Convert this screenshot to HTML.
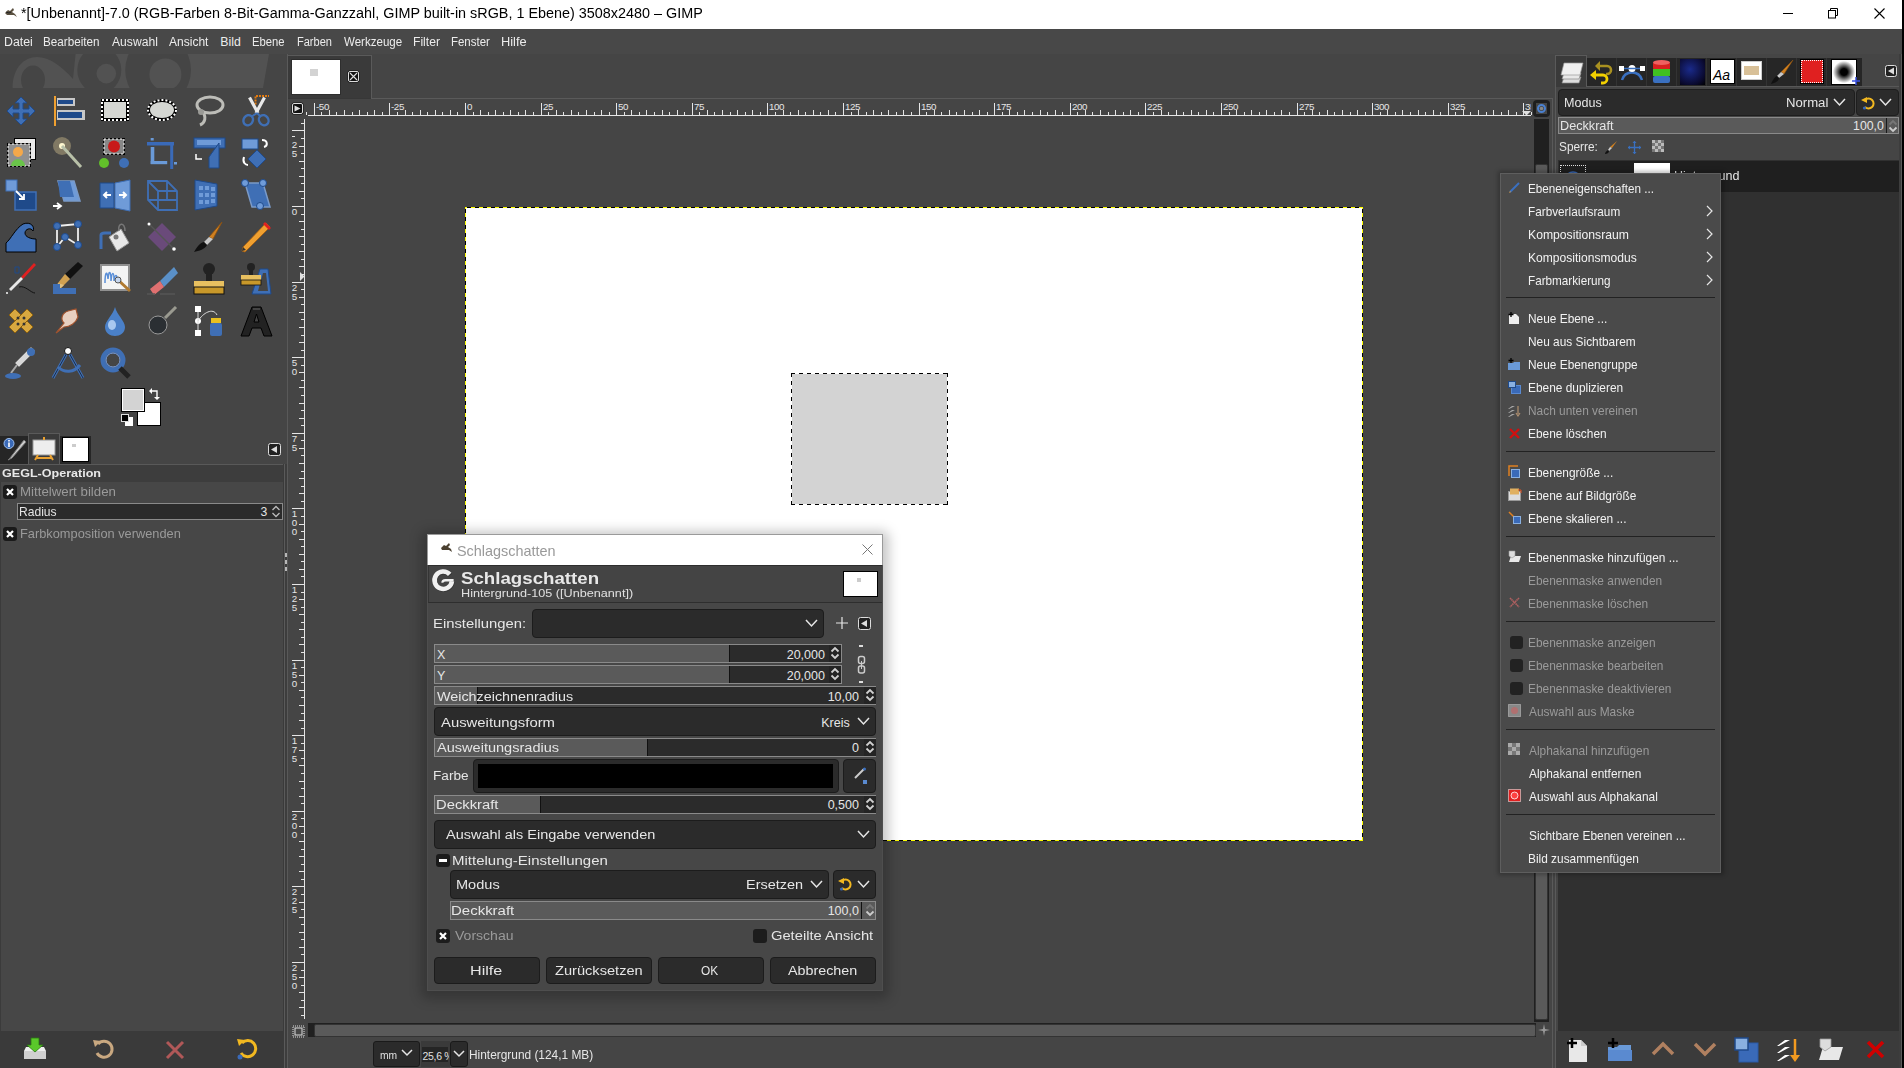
<!DOCTYPE html>
<html><head><meta charset="utf-8"><title>GIMP</title>
<style>
html,body{margin:0;padding:0}
body{width:1904px;height:1068px;overflow:hidden;position:relative;background:#454545;font-family:"Liberation Sans",sans-serif}
.a{position:absolute;box-sizing:border-box}
.t{position:absolute;white-space:nowrap;line-height:1;transform-origin:0 0}
svg.a{overflow:visible}
</style></head><body>
<div class="a" style="left:0px;top:0px;width:1904px;height:29px;background:#fff"></div>
<svg class="a" style="left:4px;top:6px;" width="14" height="12" viewBox="0 0 14 12"><path d="M1 7 L4 4 L6 5 L9 2 L10 4 L8 6 L11 8 L13 11 L10 9 L6 9 L3 9 Z" fill="#5a5040"/><path d="M2 6 L5 7 L7 6" stroke="#222" stroke-width="1" fill="none"/></svg>
<span class="t" style="left:21.40px;top:4.75px;font-size:15.3px;color:#000;transform:scaleX(0.9405);">*[Unbenannt]-7.0 (RGB-Farben 8-Bit-Gamma-Ganzzahl, GIMP built-in sRGB, 1 Ebene) 3508x2480 – GIMP</span>
<div class="a" style="left:1783px;top:13px;width:10px;height:1px;background:#000"></div>
<svg class="a" style="left:1828px;top:8px;" width="11" height="11" viewBox="0 0 11 11"><rect x="0.5" y="2.5" width="7" height="7.5" fill="none" stroke="#000"/><path d="M2.5 2.5 V0.5 H9.5 V7.5 H7.5" fill="none" stroke="#000"/></svg>
<svg class="a" style="left:1874px;top:8px;" width="11" height="11" viewBox="0 0 11 11"><path d="M0.5 0.5 L10.5 10.5 M10.5 0.5 L0.5 10.5" stroke="#000" stroke-width="1.1"/></svg>
<div class="a" style="left:0px;top:29px;width:1904px;height:25px;background:#484848"></div>
<span class="t" style="left:4.20px;top:36.19px;font-size:12.3px;color:#ececec;transform:scaleX(1.0046);">Datei</span>
<span class="t" style="left:43.35px;top:36.19px;font-size:12.3px;color:#ececec;transform:scaleX(0.9499);">Bearbeiten</span>
<span class="t" style="left:112.30px;top:36.19px;font-size:12.3px;color:#ececec;transform:scaleX(0.9858);">Auswahl</span>
<span class="t" style="left:169.00px;top:36.19px;font-size:12.3px;color:#ececec;transform:scaleX(0.9778);">Ansicht</span>
<span class="t" style="left:220.30px;top:36.19px;font-size:12.3px;color:#ececec;">Bild</span>
<span class="t" style="left:252.48px;top:36.19px;font-size:12.3px;color:#ececec;transform:scaleX(0.9159);">Ebene</span>
<span class="t" style="left:296.60px;top:36.19px;font-size:12.3px;color:#ececec;transform:scaleX(0.8971);">Farben</span>
<span class="t" style="left:344.00px;top:36.19px;font-size:12.3px;color:#ececec;transform:scaleX(0.9383);">Werkzeuge</span>
<span class="t" style="left:413.11px;top:36.19px;font-size:12.3px;color:#ececec;transform:scaleX(0.9874);">Filter</span>
<span class="t" style="left:451.47px;top:36.19px;font-size:12.3px;color:#ececec;transform:scaleX(0.9312);">Fenster</span>
<span class="t" style="left:501.26px;top:36.19px;font-size:12.3px;color:#ececec;transform:scaleX(1.0395);">Hilfe</span>
<svg class="a" style="left:0px;top:54px;" width="287" height="34" viewBox="0 0 287 34"><defs><clipPath id="wb"><rect x="0" y="0" width="287" height="34"/></clipPath></defs>
    <g clip-path="url(#wb)">
    <path d="M12.6 34 C12.6 14 24 3 37 3 C50 3 62 13 73 25 L75.6 0 L269 0 L263 34 Z" fill="#525252"/>
    <ellipse cx="33" cy="26" rx="12" ry="14.5" fill="#454545"/>
    <ellipse cx="99.3" cy="16" rx="22" ry="23.6" fill="#454545"/>
    <circle cx="106.3" cy="19.6" r="9.8" fill="#525252"/>
    <ellipse cx="158.1" cy="16" rx="32.9" ry="35.6" fill="#454545"/>
    <circle cx="165.4" cy="20.4" r="16" fill="#525252"/>
    <rect x="0" y="34" width="287" height="4" fill="#454545"/>
    </g></svg>
<svg class="a" style="left:5px;top:95px;" width="32" height="32" viewBox="0 0 32 32"><path d="M16 2 L22 8 H18 V14 H24 V10 L30 16 L24 22 V18 H18 V24 H22 L16 30 L10 24 H14 V18 H8 V22 L2 16 L8 10 V14 H14 V8 H10 Z" fill="#3f6fb5" stroke="#1f4a8a" stroke-width="1"/></svg>
<svg class="a" style="left:52px;top:95px;" width="32" height="32" viewBox="0 0 32 32"><rect x="2" y="1" width="2" height="30" fill="#f0a030"/><rect x="5" y="3" width="18" height="8" fill="#c8c8c8"/><rect x="6" y="5" width="15" height="4" fill="#1f4a8a"/><rect x="5" y="15" width="28" height="10" fill="#c8c8c8"/><rect x="6" y="17" width="24" height="6" fill="#1f4a8a"/></svg>
<svg class="a" style="left:99px;top:95px;" width="32" height="32" viewBox="0 0 32 32"><rect x="2" y="4" width="28" height="22" fill="#000"/><rect x="3" y="5" width="26" height="20" fill="none" stroke="#fff" stroke-width="2" stroke-dasharray="2 2"/><rect x="5" y="7" width="22" height="16" fill="#d4d6d2"/></svg>
<svg class="a" style="left:146px;top:95px;" width="32" height="32" viewBox="0 0 32 32"><ellipse cx="16" cy="15" rx="15" ry="11" fill="#000"/><ellipse cx="16" cy="15" rx="14" ry="10" fill="none" stroke="#fff" stroke-width="2" stroke-dasharray="2 2"/><ellipse cx="16" cy="15" rx="12" ry="8" fill="#d4d6d2"/></svg>
<svg class="a" style="left:193px;top:95px;" width="32" height="32" viewBox="0 0 32 32"><ellipse cx="17" cy="10" rx="13" ry="8" fill="none" stroke="#bdbdb8" stroke-width="3"/><path d="M9 16 C14 22 12 28 7 30" fill="none" stroke="#bdbdb8" stroke-width="3"/><circle cx="8" cy="17" r="3" fill="#9a9a96"/></svg>
<svg class="a" style="left:240px;top:95px;" width="32" height="32" viewBox="0 0 32 32"><path d="M15.5 9.5 V1 H29" stroke="#e07a10" stroke-width="2" fill="none" stroke-dasharray="2 1"/><path d="M9.5 2.5 L18 18 M24.5 2.5 L16 18" stroke="#e8e8e8" stroke-width="3.2"/><ellipse cx="8.2" cy="25.2" rx="4.6" ry="5.3" transform="rotate(35 8.2 25.2)" fill="none" stroke="#3f6fb5" stroke-width="2.4"/><ellipse cx="23.7" cy="25.2" rx="4.6" ry="5.3" transform="rotate(-35 23.7 25.2)" fill="none" stroke="#3f6fb5" stroke-width="2.4"/><path d="M17 18 L11 22 M17 18 L21 22" stroke="#3f6fb5" stroke-width="2"/></svg>
<svg class="a" style="left:5px;top:137px;" width="32" height="32" viewBox="0 0 32 32"><rect x="9" y="1" width="22" height="22" fill="#000"/><rect x="10" y="2" width="20" height="20" fill="#eaeaea"/><rect x="2" y="6" width="24" height="24" fill="#000"/><rect x="3" y="7" width="22" height="22" fill="#909090" stroke="#fff" stroke-dasharray="2 2"/><circle cx="13" cy="15" r="5" fill="#f4a84a"/><path d="M6 29 C6 20 20 20 20 29 Z" fill="#6ac44a"/></svg>
<svg class="a" style="left:52px;top:137px;" width="32" height="32" viewBox="0 0 32 32"><circle cx="10" cy="9" r="9" fill="#c9b98a" opacity="0.45"/><circle cx="10" cy="9" r="3" fill="#fff8d0"/><path d="M10 9 L29 30" stroke="#b8c0a8" stroke-width="3"/></svg>
<svg class="a" style="left:99px;top:137px;" width="32" height="32" viewBox="0 0 32 32"><rect x="4" y="1" width="22" height="17" fill="#000"/><rect x="5" y="2" width="20" height="15" fill="#888" stroke="#fff" stroke-dasharray="2 2"/><circle cx="15" cy="9.5" r="6" fill="#c81a1a"/><circle cx="5" cy="26" r="5" fill="#62c02a"/><circle cx="25" cy="26" r="5" fill="#3f6fb5"/></svg>
<svg class="a" style="left:146px;top:137px;" width="32" height="32" viewBox="0 0 32 32"><rect x="1" y="5" width="27" height="3.5" fill="#3a6ab8"/><rect x="24.2" y="5" width="3" height="27" fill="#3a6ab8"/><rect x="4.7" y="10" width="3.6" height="17" fill="#6a9ad8"/><rect x="4.7" y="24" width="16.5" height="3.2" fill="#6a9ad8"/><rect x="4.7" y="1" width="3" height="2.5" fill="#6a9ad8"/><rect x="28" y="25" width="3" height="2.5" fill="#6a9ad8"/></svg>
<svg class="a" style="left:193px;top:137px;" width="32" height="32" viewBox="0 0 32 32"><rect x="1" y="1" width="31" height="10" fill="#3f6fb5" stroke="#1f4a8a"/><rect x="4" y="3" width="24" height="5" fill="#6f9bd8"/><path d="M26 6 L26 31 L16 31 L16 20 Z" fill="#3f6fb5" stroke="#1f4a8a"/><path d="M3 17 V22 H9" stroke="#fff" stroke-width="1.5" fill="none"/></svg>
<svg class="a" style="left:240px;top:137px;" width="32" height="32" viewBox="0 0 32 32"><rect x="2" y="2" width="16" height="10" fill="#6f9bd8" stroke="#1f4a8a"/><path d="M17 13 L26 22 L17 31 L8 22 Z" fill="#3f6fb5" stroke="#1f4a8a"/><path d="M22 3 C28 3 28 9 24 10" stroke="#fff" stroke-width="2" fill="none"/><path d="M4 20 C2 26 6 28 8 28" stroke="#fff" stroke-width="2" fill="none"/></svg>
<svg class="a" style="left:5px;top:179px;" width="32" height="32" viewBox="0 0 32 32"><rect x="1" y="1" width="11" height="11" fill="#6f9bd8" stroke="#3f6fb5"/><rect x="10" y="13" width="21" height="18" fill="#1f4a8a" stroke="#3f6fb5" stroke-width="1.5"/><path d="M11 12 L19 20 M19 15 V20 H14" stroke="#fff" stroke-width="1.8" fill="none"/></svg>
<svg class="a" style="left:52px;top:179px;" width="32" height="32" viewBox="0 0 32 32"><path d="M6 2 L22 2 L28 22 L12 22 Z" fill="#6f9bd8" stroke="#7a9ac8" stroke-width="1.5"/><path d="M6 2 L18 2 L22 18 L8 18 Z" fill="#3f6fb5"/><path d="M1 27 H8 M5 24 L9 27 L5 30" stroke="#fff" stroke-width="1.8" fill="none"/></svg>
<svg class="a" style="left:99px;top:179px;" width="32" height="32" viewBox="0 0 32 32"><path d="M1 4 H15 V29 H1 Z" fill="#3f6fb5" stroke="#1f4a8a"/><path d="M16 4 L31 1 V32 L16 29 Z" fill="#6f9bd8" stroke="#3f6fb5"/><path d="M5 16 H12 M8 13 L5 16 L8 19 M20 16 H27 M24 13 L27 16 L24 19" stroke="#fff" stroke-width="2" fill="none"/></svg>
<svg class="a" style="left:146px;top:179px;" width="32" height="32" viewBox="0 0 32 32"><path d="M2 2 H21 L31 12 V31 H12 L2 21 Z M2 2 L12 12 H31 M12 12 V31 M21 2 V21 H31 M2 21 H21" fill="none" stroke="#3f6fb5" stroke-width="1.8"/></svg>
<svg class="a" style="left:193px;top:179px;" width="32" height="32" viewBox="0 0 32 32"><path d="M2 1 L24 5 V27 L2 31 Z" fill="#3f6fb5" stroke="#1f4a8a"/><g fill="#6f9bd8"><rect x="6" y="7" width="4" height="4"/><rect x="12" y="7" width="4" height="4"/><rect x="18" y="8" width="4" height="4"/><rect x="6" y="14" width="4" height="4"/><rect x="12" y="14" width="4" height="4"/><rect x="18" y="14" width="4" height="4"/><rect x="6" y="21" width="4" height="4"/><rect x="12" y="21" width="4" height="4"/><rect x="18" y="20" width="4" height="4"/></g></svg>
<svg class="a" style="left:240px;top:179px;" width="32" height="32" viewBox="0 0 32 32"><path d="M5 4 L23 4 L30 28 L12 28 Z" fill="#3f6fb5" stroke="#7a9ac8" stroke-width="1.5"/><circle cx="5" cy="4" r="3.5" fill="#6f9bd8" stroke="#1f4a8a"/><circle cx="23" cy="4" r="3.5" fill="#6f9bd8" stroke="#1f4a8a"/><circle cx="20" cy="27" r="3.5" fill="#6f9bd8" stroke="#1f4a8a"/></svg>
<svg class="a" style="left:5px;top:221px;" width="32" height="32" viewBox="0 0 32 32"><path d="M1 31 V22 C6 18 10 8 18 3 C26 0 30 6 28 10 C26 6 20 8 20 12 C20 16 26 18 31 18 V31 Z" fill="#3f6fb5" stroke="#000" stroke-width="1"/></svg>
<svg class="a" style="left:52px;top:221px;" width="32" height="32" viewBox="0 0 32 32"><path d="M5 5 L26 3 L26 24 L13 16 L5 26 Z" fill="none" stroke="#eee" stroke-width="1.8"/><g fill="#3f6fb5" stroke="#1f4a8a"><circle cx="5" cy="5" r="3.5"/><circle cx="26" cy="3" r="3.5"/><circle cx="13" cy="16" r="3.5"/><circle cx="5" cy="26" r="3.5"/><circle cx="26" cy="24" r="3.5"/></g></svg>
<svg class="a" style="left:99px;top:221px;" width="32" height="32" viewBox="0 0 32 32"><path d="M2 28 V14 C2 12 4 12 6 12 H12" stroke="#3f6fb5" stroke-width="3" fill="none"/><path d="M10 16 L22 8 L30 22 L18 30 Z" fill="#e8e8e8" stroke="#999"/><circle cx="17" cy="16" r="2.5" fill="#777"/><path d="M20 10 C18 2 26 0 26 10" stroke="#777" stroke-width="1.5" fill="none"/></svg>
<svg class="a" style="left:146px;top:221px;" width="32" height="32" viewBox="0 0 32 32"><path d="M16 2 L30 16 L16 30 L2 16 Z" fill="#6a4a7a"/><path d="M2 2 L29 29" stroke="#555" stroke-width="1.5"/><circle cx="3" cy="3" r="1.5" fill="#fff"/><circle cx="28" cy="28" r="1.8" fill="#fff"/></svg>
<svg class="a" style="left:193px;top:221px;" width="32" height="32" viewBox="0 0 32 32"><path d="M29 1 L20 18 L16 16 Z" fill="#d08020" stroke="#8a5010" stroke-width="0.8"/><path d="M20 18 L14 24 L11 21 L16 16 Z" fill="#c8c8c8"/><path d="M11 21 C6 22 3 28 1 31 C6 30 12 28 14 24 Z" fill="#111"/></svg>
<svg class="a" style="left:240px;top:221px;" width="32" height="32" viewBox="0 0 32 32"><path d="M5 31 L2 30 L3 26 L26 2 L30 6 Z" fill="#f0a030" stroke="#a86010" stroke-width="0.8"/><path d="M25 1 L31 7 L29 9 L23 3 Z" fill="#e02020"/><path d="M2 30 L3 26 L6 29 Z" fill="#333"/></svg>
<svg class="a" style="left:5px;top:263px;" width="32" height="32" viewBox="0 0 32 32"><path d="M31 2 L18 16 L16 14 L29 0 Z" fill="#e02020"/><path d="M18 16 L6 28 L4 26 L16 14 Z" fill="#e8e8e8" stroke="#999" stroke-width="0.5"/><path d="M10 4 H14 V10 H10 Z" fill="none" stroke="#1f4a8a"/><path d="M14 24 C20 22 26 30 30 30" stroke="#111" fill="none"/><rect x="1" y="29" width="2" height="2" fill="#ccc"/></svg>
<svg class="a" style="left:52px;top:263px;" width="32" height="32" viewBox="0 0 32 32"><path d="M31 3 L18 16 L13 11 L26 -1 Z" fill="#111"/><path d="M13 11 L18 16 L8 26 L6 20 Z" fill="#d0a050"/><path d="M1 30 L6 20 L12 22 L10 24 Z" fill="#e0c080"/><path d="M1 21 H8 V25 H24 V31 H1 Z" fill="#3f6fb5"/></svg>
<svg class="a" style="left:99px;top:263px;" width="32" height="32" viewBox="0 0 32 32"><rect x="1" y="1" width="30" height="27" fill="#909090"/><rect x="3" y="3" width="26" height="23" fill="#f4f4f4"/><path d="M6 20 C6 10 8 6 9 16 C10 6 12 8 12 18 C13 8 15 8 15 18 C16 10 18 12 18 16" stroke="#5a8fd8" stroke-width="1.5" fill="none"/><path d="M18 16 L31 28" stroke="#b07a30" stroke-width="3"/><circle cx="19" cy="17" r="3" fill="#c8d8f0" stroke="#555"/></svg>
<svg class="a" style="left:146px;top:263px;" width="32" height="32" viewBox="0 0 32 32"><path d="M14 18 L28 4 L32 10 L18 24 Z" fill="#5a90c8"/><path d="M4 26 L14 18 L18 24 L8 32 Z" fill="#e07070"/><path d="M1 31 H9 M14 31 H29" stroke="#555" stroke-width="1.5"/></svg>
<svg class="a" style="left:193px;top:263px;" width="32" height="32" viewBox="0 0 32 32"><ellipse cx="16" cy="6" rx="6" ry="6" fill="#222"/><rect x="13" y="8" width="6" height="12" fill="#222"/><rect x="1" y="18" width="30" height="6" fill="#e8c060"/><rect x="1" y="24" width="30" height="7" fill="#c8982a" stroke="#111" stroke-width="1"/></svg>
<svg class="a" style="left:240px;top:263px;" width="32" height="32" viewBox="0 0 32 32"><path d="M20 6 H28 L31 31 H12 Z" fill="#3f6fb5" stroke="#1f4a8a"/><path d="M23 10 H26 L28 28 H18 Z" fill="#454545"/><ellipse cx="11" cy="4" rx="4" ry="4" fill="#222"/><rect x="9" y="5" width="4" height="7" fill="#222"/><rect x="1" y="12" width="20" height="5" fill="#e8c060"/><rect x="1" y="17" width="20" height="5" fill="#c8982a" stroke="#111" stroke-width="0.8"/></svg>
<svg class="a" style="left:5px;top:305px;" width="32" height="32" viewBox="0 0 32 32"><path d="M4 10 L10 4 L28 22 L22 28 Z" fill="#d8a840" stroke="#8a6010"/><path d="M4 22 L22 4 L28 10 L10 28 Z" fill="#d8a840" stroke="#8a6010"/><g fill="#333"><circle cx="13" cy="13" r="1.5"/><circle cx="19" cy="13" r="1.5"/><circle cx="13" cy="19" r="1.5"/><circle cx="19" cy="19" r="1.5"/></g></svg>
<svg class="a" style="left:52px;top:305px;" width="32" height="32" viewBox="0 0 32 32"><path d="M4 28 L12 18 C8 14 10 8 16 6 L24 4 L26 12 C24 18 18 22 12 22 Z" fill="#e8cfc0" stroke="#a0522d" stroke-width="1.2"/></svg>
<svg class="a" style="left:99px;top:305px;" width="32" height="32" viewBox="0 0 32 32"><path d="M16 2 C18 10 26 16 26 22 C26 28 21 31 16 31 C11 31 6 28 6 22 C6 16 14 10 16 2 Z" fill="#4a80c8"/><ellipse cx="13" cy="20" rx="4" ry="5" fill="#a8c8f0"/></svg>
<svg class="a" style="left:146px;top:305px;" width="32" height="32" viewBox="0 0 32 32"><circle cx="12" cy="20" r="9" fill="#2b2f33" stroke="#999" stroke-width="1"/><path d="M19 13 L30 2" stroke="#9a9a90" stroke-width="3"/></svg>
<svg class="a" style="left:193px;top:305px;" width="32" height="32" viewBox="0 0 32 32"><rect x="2" y="1" width="6" height="6" fill="#fff"/><rect x="2" y="25" width="6" height="6" fill="#fff"/><circle cx="5" cy="16" r="3" fill="#fff"/><path d="M5 7 V25 M5 16 C10 8 20 2 24 10" stroke="#ddd" fill="none"/><rect x="18" y="13" width="10" height="5" fill="#e8c020"/><rect x="17" y="18" width="12" height="13" rx="2" fill="#3f6fb5"/></svg>
<svg class="a" style="left:240px;top:305px;" width="32" height="32" viewBox="0 0 32 32"><path d="M1 31 L12 2 H21 L32 31 H24 L21 23 H12 L9 31 Z M14 17 H19 L16.5 9 Z" fill="#222" stroke="#000"/><path d="M13 4 H20" stroke="#666"/></svg>
<svg class="a" style="left:5px;top:347px;" width="32" height="32" viewBox="0 0 32 32"><path d="M30 4 L14 20 L10 16 L26 0 Z" fill="#d8d8d8" stroke="#777" stroke-width="0.8"/><circle cx="26" cy="5" r="4" fill="#3f6fb5"/><path d="M12 18 L6 26" stroke="#aaa" stroke-width="2"/><ellipse cx="8" cy="29" rx="8" ry="3" fill="#3f6fb5"/></svg>
<svg class="a" style="left:52px;top:347px;" width="32" height="32" viewBox="0 0 32 32"><path d="M1 31 L16 4 L31 31" stroke="#3f6fb5" stroke-width="3" fill="none"/><path d="M1 31 L16 4 L31 31" stroke="#000" stroke-width="0.6" fill="none"/><circle cx="16" cy="4" r="3.5" fill="#fff" stroke="#111"/><path d="M6 20 C12 26 22 26 28 18" stroke="#3f6fb5" stroke-width="3" fill="none"/></svg>
<svg class="a" style="left:99px;top:347px;" width="32" height="32" viewBox="0 0 32 32"><circle cx="14" cy="13" r="10" fill="none" stroke="#3f6fb5" stroke-width="5"/><circle cx="14" cy="13" r="7" fill="none" stroke="#7aa0e0" stroke-width="1"/><path d="M21 21 L30 30" stroke="#222" stroke-width="5"/></svg>
<div class="a" style="left:137px;top:402px;width:24px;height:24px;background:#fff;border:1px solid #000"></div>
<div class="a" style="left:121px;top:388px;width:24px;height:24px;background:#d3d3d3;border:1px solid #000;box-shadow:inset 0 0 0 1px #fff"></div>
<svg class="a" style="left:149px;top:388px;" width="12" height="12" viewBox="0 0 12 12"><path d="M2 3 H8 V10" stroke="#fff" stroke-width="1.4" fill="none"/><path d="M0 3 L3 0 V6 Z M8 12 L5 9 H11 Z" fill="#fff"/></svg>
<div class="a" style="left:125px;top:417px;width:8px;height:9px;background:#fff"></div>
<div class="a" style="left:121px;top:414px;width:8px;height:8px;background:#000;border:1px solid #ddd"></div>
<div class="a" style="left:0px;top:436px;width:28px;height:28px;background:#262626"></div>
<div class="a" style="left:60px;top:436px;width:31px;height:28px;background:#262626"></div>
<div class="a" style="left:28px;top:433px;width:32px;height:31px;background:#3a3a3a;border:1px solid #5a5a5a;border-bottom:none"></div>
<svg class="a" style="left:2px;top:438px;" width="26" height="24" viewBox="0 0 26 24"><circle cx="7" cy="5.5" r="5" fill="#3a6ab8" stroke="#9ec0f0"/><rect x="6.2" y="4.5" width="1.6" height="4.5" fill="#fff"/><rect x="6.2" y="2" width="1.6" height="1.5" fill="#fff"/><path d="M22 2 L8 20 L6 22 L10 20 L24 4 Z" fill="#ccc" stroke="#777"/></svg>
<svg class="a" style="left:32px;top:437px;" width="25" height="24" viewBox="0 0 25 24"><rect x="1" y="3" width="22" height="15" fill="#eee" stroke="#999"/><path d="M6 18 L3 23 M18 18 L21 23 M4 21 H20 M12 0 V3" stroke="#e8a030" stroke-width="2"/></svg>
<div class="a" style="left:62px;top:437px;width:27px;height:25px;background:#fff;border:1px solid #000"></div>
<div class="a" style="left:72px;top:444px;width:4px;height:3px;background:#ccc"></div>
<svg class="a" style="left:268px;top:443px;" width="13" height="13" viewBox="0 0 13 13"><rect x="0.5" y="0.5" width="12" height="12" rx="2" fill="#222" stroke="#ddd"/><path d="M3 6.5 L9 3 V10 Z" fill="#ddd"/></svg>
<div class="a" style="left:0px;top:464px;width:285px;height:568px;background:#454545;border-top:1px solid #595959"></div>
<div class="a" style="left:0px;top:465px;width:284px;height:17px;background:#3d3d3d"></div>
<span class="t" style="left:1.50px;top:468.37px;font-size:11.5px;color:#e8e8e8;font-weight:bold;transform:scaleX(1.0915);">GEGL-Operation</span>
<div class="a" style="left:0px;top:482px;width:283px;height:549px;background:#474747;border-left:1px solid #3b3b3b"></div>
<div class="a" style="left:3px;top:485px;width:14px;height:14px;background:#1a1a1a;border-radius:3px"></div>
<svg class="a" style="left:3px;top:485px;" width="14" height="14" viewBox="0 0 14 14"><path d="M4 4 L10 10 M10 4 L4 10" stroke="#fff" stroke-width="2.2"/></svg>
<span class="t" style="left:19.91px;top:485.77px;font-size:12.2px;color:#9a9a9a;transform:scaleX(1.0895);">Mittelwert bilden</span>
<div class="a" style="left:17px;top:503px;width:266px;height:17px;background:#2b2b2b;border:1px solid #8a8a8a"></div>
<span class="t" style="left:18.51px;top:506.27px;font-size:12.2px;color:#e4e4e4;transform:scaleX(0.9907);">Radius</span>
<span class="t" style="right:1636.72px;top:506.27px;font-size:12.2px;color:#e4e4e4;transform-origin:100% 0;">3</span>
<svg class="a" style="left:271px;top:505px;" width="10" height="13" viewBox="0 0 10 13"><path d="M1.5 5 L5 1.5 L8.5 5 M1.5 8 L5 11.5 L8.5 8" stroke="#bbb" stroke-width="1.3" fill="none"/></svg>
<div class="a" style="left:3px;top:527px;width:14px;height:14px;background:#1a1a1a;border-radius:3px"></div>
<svg class="a" style="left:3px;top:527px;" width="14" height="14" viewBox="0 0 14 14"><path d="M4 4 L10 10 M10 4 L4 10" stroke="#fff" stroke-width="2.2"/></svg>
<span class="t" style="left:19.95px;top:527.87px;font-size:12.2px;color:#9a9a9a;transform:scaleX(1.0507);">Farbkomposition verwenden</span>
<div class="a" style="left:0px;top:1031px;width:283px;height:37px;background:#3a3a3a"></div>
<svg class="a" style="left:22px;top:1037px;" width="26" height="24" viewBox="0 0 26 24"><path d="M2 14 H24 V22 H2 Z" fill="#d0d0d0"/><path d="M4 10 H22 L24 14 H2 Z" fill="#eee"/><path d="M9 1 H17 V8 H21 L13 15 L5 8 H9 Z" fill="#5ac82a" stroke="#2a7a10" stroke-width="0.8"/></svg>
<svg class="a" style="left:92px;top:1038px;" width="24" height="22" viewBox="0 0 24 22"><path d="M6 6 A8 8 0 1 1 5 15" stroke="#c9a880" stroke-width="3" fill="none"/><path d="M1 2 L9 3 L3 9 Z" fill="#c9a880"/></svg>
<svg class="a" style="left:165px;top:1040px;" width="20" height="20" viewBox="0 0 20 20"><path d="M2 2 L18 18 M18 2 L2 18" stroke="#b05858" stroke-width="3"/></svg>
<svg class="a" style="left:234px;top:1037px;" width="26" height="24" viewBox="0 0 26 24"><path d="M8 6 A8 8 0 1 1 7 16" stroke="#f2b820" stroke-width="3" fill="none"/><path d="M3 2 L11 3 L5 9 Z" fill="#f2b820"/><circle cx="6" cy="20" r="2.5" fill="#3a6ab8"/></svg>
<div class="a" style="left:283px;top:464px;width:1px;height:604px;background:#3a3a3a"></div>
<div class="a" style="left:284px;top:464px;width:1px;height:604px;background:#5a5a5a"></div>
<div class="a" style="left:285px;top:464px;width:2px;height:604px;background:#3d3d3d"></div>
<div class="a" style="left:287px;top:54px;width:1px;height:1014px;background:#595959"></div>
<div class="a" style="left:285px;top:553px;width:2px;height:4px;background:#b8b8b8"></div>
<div class="a" style="left:285px;top:560px;width:2px;height:4px;background:#b8b8b8"></div>
<div class="a" style="left:285px;top:567px;width:2px;height:4px;background:#b8b8b8"></div>
<div class="a" style="left:287px;top:55px;width:85px;height:44px;background:#3a3a3a;border:1px solid #5a5a5a;border-bottom:none"></div>
<div class="a" style="left:288px;top:98px;width:83px;height:1px;background:#373737"></div>
<div class="a" style="left:371px;top:98px;width:1182px;height:1px;background:#5a5a5a"></div>
<div class="a" style="left:291px;top:59px;width:50px;height:36px;background:#2e2e2e"></div>
<div class="a" style="left:292px;top:60px;width:48px;height:34px;background:#fff"></div>
<div class="a" style="left:310px;top:69px;width:8px;height:7px;background:#d3d3d3"></div>
<svg class="a" style="left:347px;top:70px;" width="14" height="13" viewBox="0 0 14 13"><rect x="0.5" y="0.5" width="12" height="12" rx="2.5" fill="#111"/><rect x="1.5" y="1.5" width="10" height="10" rx="1.5" fill="none" stroke="#ddd"/><path d="M3 3 L10 10 M10 3 L3 10" stroke="#ddd" stroke-width="1.1"/></svg>
<div class="a" style="left:1552px;top:98px;width:1px;height:970px;background:#5a5a5a"></div>
<svg class="a" style="left:291px;top:102px;" width="13" height="13" viewBox="0 0 13 13"><rect x="0.5" y="0.5" width="12" height="12" rx="2.5" fill="#111"/><rect x="1.5" y="1.5" width="10" height="10" rx="1.5" fill="none" stroke="#ddd"/><path d="M3.5 3.5 L9.5 6.5 L3.5 9.5 Z" fill="#ddd"/></svg>
<svg class="a" style="left:308px;top:100px;shape-rendering:crispEdges" width="1223" height="16" viewBox="0 0 1223 16"><rect x="0" y="15" width="1223" height="1" fill="#e6e6e6"/><rect x="-2" y="12" width="1" height="3" fill="#e6e6e6"/><rect x="6" y="3" width="1" height="12" fill="#e6e6e6"/><rect x="13" y="12" width="1" height="3" fill="#e6e6e6"/><rect x="21" y="10" width="1" height="5" fill="#e6e6e6"/><rect x="28" y="12" width="1" height="3" fill="#e6e6e6"/><rect x="36" y="10" width="1" height="5" fill="#e6e6e6"/><rect x="44" y="12" width="1" height="3" fill="#e6e6e6"/><rect x="51" y="10" width="1" height="5" fill="#e6e6e6"/><rect x="59" y="12" width="1" height="3" fill="#e6e6e6"/><rect x="66" y="10" width="1" height="5" fill="#e6e6e6"/><rect x="74" y="12" width="1" height="3" fill="#e6e6e6"/><rect x="81" y="3" width="1" height="12" fill="#e6e6e6"/><rect x="89" y="12" width="1" height="3" fill="#e6e6e6"/><rect x="97" y="10" width="1" height="5" fill="#e6e6e6"/><rect x="104" y="12" width="1" height="3" fill="#e6e6e6"/><rect x="112" y="10" width="1" height="5" fill="#e6e6e6"/><rect x="119" y="12" width="1" height="3" fill="#e6e6e6"/><rect x="127" y="10" width="1" height="5" fill="#e6e6e6"/><rect x="134" y="12" width="1" height="3" fill="#e6e6e6"/><rect x="142" y="10" width="1" height="5" fill="#e6e6e6"/><rect x="149" y="12" width="1" height="3" fill="#e6e6e6"/><rect x="157" y="3" width="1" height="12" fill="#e6e6e6"/><rect x="165" y="12" width="1" height="3" fill="#e6e6e6"/><rect x="172" y="10" width="1" height="5" fill="#e6e6e6"/><rect x="180" y="12" width="1" height="3" fill="#e6e6e6"/><rect x="187" y="10" width="1" height="5" fill="#e6e6e6"/><rect x="195" y="12" width="1" height="3" fill="#e6e6e6"/><rect x="202" y="10" width="1" height="5" fill="#e6e6e6"/><rect x="210" y="12" width="1" height="3" fill="#e6e6e6"/><rect x="217" y="10" width="1" height="5" fill="#e6e6e6"/><rect x="225" y="12" width="1" height="3" fill="#e6e6e6"/><rect x="233" y="3" width="1" height="12" fill="#e6e6e6"/><rect x="240" y="12" width="1" height="3" fill="#e6e6e6"/><rect x="248" y="10" width="1" height="5" fill="#e6e6e6"/><rect x="255" y="12" width="1" height="3" fill="#e6e6e6"/><rect x="263" y="10" width="1" height="5" fill="#e6e6e6"/><rect x="270" y="12" width="1" height="3" fill="#e6e6e6"/><rect x="278" y="10" width="1" height="5" fill="#e6e6e6"/><rect x="286" y="12" width="1" height="3" fill="#e6e6e6"/><rect x="293" y="10" width="1" height="5" fill="#e6e6e6"/><rect x="301" y="12" width="1" height="3" fill="#e6e6e6"/><rect x="308" y="3" width="1" height="12" fill="#e6e6e6"/><rect x="316" y="12" width="1" height="3" fill="#e6e6e6"/><rect x="323" y="10" width="1" height="5" fill="#e6e6e6"/><rect x="331" y="12" width="1" height="3" fill="#e6e6e6"/><rect x="338" y="10" width="1" height="5" fill="#e6e6e6"/><rect x="346" y="12" width="1" height="3" fill="#e6e6e6"/><rect x="354" y="10" width="1" height="5" fill="#e6e6e6"/><rect x="361" y="12" width="1" height="3" fill="#e6e6e6"/><rect x="369" y="10" width="1" height="5" fill="#e6e6e6"/><rect x="376" y="12" width="1" height="3" fill="#e6e6e6"/><rect x="384" y="3" width="1" height="12" fill="#e6e6e6"/><rect x="391" y="12" width="1" height="3" fill="#e6e6e6"/><rect x="399" y="10" width="1" height="5" fill="#e6e6e6"/><rect x="406" y="12" width="1" height="3" fill="#e6e6e6"/><rect x="414" y="10" width="1" height="5" fill="#e6e6e6"/><rect x="422" y="12" width="1" height="3" fill="#e6e6e6"/><rect x="429" y="10" width="1" height="5" fill="#e6e6e6"/><rect x="437" y="12" width="1" height="3" fill="#e6e6e6"/><rect x="444" y="10" width="1" height="5" fill="#e6e6e6"/><rect x="452" y="12" width="1" height="3" fill="#e6e6e6"/><rect x="459" y="3" width="1" height="12" fill="#e6e6e6"/><rect x="467" y="12" width="1" height="3" fill="#e6e6e6"/><rect x="475" y="10" width="1" height="5" fill="#e6e6e6"/><rect x="482" y="12" width="1" height="3" fill="#e6e6e6"/><rect x="490" y="10" width="1" height="5" fill="#e6e6e6"/><rect x="497" y="12" width="1" height="3" fill="#e6e6e6"/><rect x="505" y="10" width="1" height="5" fill="#e6e6e6"/><rect x="512" y="12" width="1" height="3" fill="#e6e6e6"/><rect x="520" y="10" width="1" height="5" fill="#e6e6e6"/><rect x="527" y="12" width="1" height="3" fill="#e6e6e6"/><rect x="535" y="3" width="1" height="12" fill="#e6e6e6"/><rect x="543" y="12" width="1" height="3" fill="#e6e6e6"/><rect x="550" y="10" width="1" height="5" fill="#e6e6e6"/><rect x="558" y="12" width="1" height="3" fill="#e6e6e6"/><rect x="565" y="10" width="1" height="5" fill="#e6e6e6"/><rect x="573" y="12" width="1" height="3" fill="#e6e6e6"/><rect x="580" y="10" width="1" height="5" fill="#e6e6e6"/><rect x="588" y="12" width="1" height="3" fill="#e6e6e6"/><rect x="595" y="10" width="1" height="5" fill="#e6e6e6"/><rect x="603" y="12" width="1" height="3" fill="#e6e6e6"/><rect x="611" y="3" width="1" height="12" fill="#e6e6e6"/><rect x="618" y="12" width="1" height="3" fill="#e6e6e6"/><rect x="626" y="10" width="1" height="5" fill="#e6e6e6"/><rect x="633" y="12" width="1" height="3" fill="#e6e6e6"/><rect x="641" y="10" width="1" height="5" fill="#e6e6e6"/><rect x="648" y="12" width="1" height="3" fill="#e6e6e6"/><rect x="656" y="10" width="1" height="5" fill="#e6e6e6"/><rect x="664" y="12" width="1" height="3" fill="#e6e6e6"/><rect x="671" y="10" width="1" height="5" fill="#e6e6e6"/><rect x="679" y="12" width="1" height="3" fill="#e6e6e6"/><rect x="686" y="3" width="1" height="12" fill="#e6e6e6"/><rect x="694" y="12" width="1" height="3" fill="#e6e6e6"/><rect x="701" y="10" width="1" height="5" fill="#e6e6e6"/><rect x="709" y="12" width="1" height="3" fill="#e6e6e6"/><rect x="716" y="10" width="1" height="5" fill="#e6e6e6"/><rect x="724" y="12" width="1" height="3" fill="#e6e6e6"/><rect x="732" y="10" width="1" height="5" fill="#e6e6e6"/><rect x="739" y="12" width="1" height="3" fill="#e6e6e6"/><rect x="747" y="10" width="1" height="5" fill="#e6e6e6"/><rect x="754" y="12" width="1" height="3" fill="#e6e6e6"/><rect x="762" y="3" width="1" height="12" fill="#e6e6e6"/><rect x="769" y="12" width="1" height="3" fill="#e6e6e6"/><rect x="777" y="10" width="1" height="5" fill="#e6e6e6"/><rect x="784" y="12" width="1" height="3" fill="#e6e6e6"/><rect x="792" y="10" width="1" height="5" fill="#e6e6e6"/><rect x="800" y="12" width="1" height="3" fill="#e6e6e6"/><rect x="807" y="10" width="1" height="5" fill="#e6e6e6"/><rect x="815" y="12" width="1" height="3" fill="#e6e6e6"/><rect x="822" y="10" width="1" height="5" fill="#e6e6e6"/><rect x="830" y="12" width="1" height="3" fill="#e6e6e6"/><rect x="837" y="3" width="1" height="12" fill="#e6e6e6"/><rect x="845" y="12" width="1" height="3" fill="#e6e6e6"/><rect x="853" y="10" width="1" height="5" fill="#e6e6e6"/><rect x="860" y="12" width="1" height="3" fill="#e6e6e6"/><rect x="868" y="10" width="1" height="5" fill="#e6e6e6"/><rect x="875" y="12" width="1" height="3" fill="#e6e6e6"/><rect x="883" y="10" width="1" height="5" fill="#e6e6e6"/><rect x="890" y="12" width="1" height="3" fill="#e6e6e6"/><rect x="898" y="10" width="1" height="5" fill="#e6e6e6"/><rect x="905" y="12" width="1" height="3" fill="#e6e6e6"/><rect x="913" y="3" width="1" height="12" fill="#e6e6e6"/><rect x="921" y="12" width="1" height="3" fill="#e6e6e6"/><rect x="928" y="10" width="1" height="5" fill="#e6e6e6"/><rect x="936" y="12" width="1" height="3" fill="#e6e6e6"/><rect x="943" y="10" width="1" height="5" fill="#e6e6e6"/><rect x="951" y="12" width="1" height="3" fill="#e6e6e6"/><rect x="958" y="10" width="1" height="5" fill="#e6e6e6"/><rect x="966" y="12" width="1" height="3" fill="#e6e6e6"/><rect x="973" y="10" width="1" height="5" fill="#e6e6e6"/><rect x="981" y="12" width="1" height="3" fill="#e6e6e6"/><rect x="989" y="3" width="1" height="12" fill="#e6e6e6"/><rect x="996" y="12" width="1" height="3" fill="#e6e6e6"/><rect x="1004" y="10" width="1" height="5" fill="#e6e6e6"/><rect x="1011" y="12" width="1" height="3" fill="#e6e6e6"/><rect x="1019" y="10" width="1" height="5" fill="#e6e6e6"/><rect x="1026" y="12" width="1" height="3" fill="#e6e6e6"/><rect x="1034" y="10" width="1" height="5" fill="#e6e6e6"/><rect x="1042" y="12" width="1" height="3" fill="#e6e6e6"/><rect x="1049" y="10" width="1" height="5" fill="#e6e6e6"/><rect x="1057" y="12" width="1" height="3" fill="#e6e6e6"/><rect x="1064" y="3" width="1" height="12" fill="#e6e6e6"/><rect x="1072" y="12" width="1" height="3" fill="#e6e6e6"/><rect x="1079" y="10" width="1" height="5" fill="#e6e6e6"/><rect x="1087" y="12" width="1" height="3" fill="#e6e6e6"/><rect x="1094" y="10" width="1" height="5" fill="#e6e6e6"/><rect x="1102" y="12" width="1" height="3" fill="#e6e6e6"/><rect x="1110" y="10" width="1" height="5" fill="#e6e6e6"/><rect x="1117" y="12" width="1" height="3" fill="#e6e6e6"/><rect x="1125" y="10" width="1" height="5" fill="#e6e6e6"/><rect x="1132" y="12" width="1" height="3" fill="#e6e6e6"/><rect x="1140" y="3" width="1" height="12" fill="#e6e6e6"/><rect x="1147" y="12" width="1" height="3" fill="#e6e6e6"/><rect x="1155" y="10" width="1" height="5" fill="#e6e6e6"/><rect x="1162" y="12" width="1" height="3" fill="#e6e6e6"/><rect x="1170" y="10" width="1" height="5" fill="#e6e6e6"/><rect x="1178" y="12" width="1" height="3" fill="#e6e6e6"/><rect x="1185" y="10" width="1" height="5" fill="#e6e6e6"/><rect x="1193" y="12" width="1" height="3" fill="#e6e6e6"/><rect x="1200" y="10" width="1" height="5" fill="#e6e6e6"/><rect x="1208" y="12" width="1" height="3" fill="#e6e6e6"/><rect x="1215" y="3" width="1" height="12" fill="#e6e6e6"/><rect x="1223" y="12" width="1" height="3" fill="#e6e6e6"/></svg>
<div class="a" style="left:308px;top:100px;width:1223px;height:16px;overflow:hidden">
<span class="t" style="left:8.00px;top:2.20px;font-size:9.8px;color:#e6e6e6;letter-spacing:-0.4px">-50</span>
<span class="t" style="left:83.00px;top:2.20px;font-size:9.8px;color:#e6e6e6;letter-spacing:-0.4px">-25</span>
<span class="t" style="left:159.00px;top:2.20px;font-size:9.8px;color:#e6e6e6;letter-spacing:-0.4px">0</span>
<span class="t" style="left:235.00px;top:2.20px;font-size:9.8px;color:#e6e6e6;letter-spacing:-0.4px">25</span>
<span class="t" style="left:310.00px;top:2.20px;font-size:9.8px;color:#e6e6e6;letter-spacing:-0.4px">50</span>
<span class="t" style="left:386.00px;top:2.20px;font-size:9.8px;color:#e6e6e6;letter-spacing:-0.4px">75</span>
<span class="t" style="left:461.00px;top:2.20px;font-size:9.8px;color:#e6e6e6;letter-spacing:-0.4px">100</span>
<span class="t" style="left:537.00px;top:2.20px;font-size:9.8px;color:#e6e6e6;letter-spacing:-0.4px">125</span>
<span class="t" style="left:613.00px;top:2.20px;font-size:9.8px;color:#e6e6e6;letter-spacing:-0.4px">150</span>
<span class="t" style="left:688.00px;top:2.20px;font-size:9.8px;color:#e6e6e6;letter-spacing:-0.4px">175</span>
<span class="t" style="left:764.00px;top:2.20px;font-size:9.8px;color:#e6e6e6;letter-spacing:-0.4px">200</span>
<span class="t" style="left:839.00px;top:2.20px;font-size:9.8px;color:#e6e6e6;letter-spacing:-0.4px">225</span>
<span class="t" style="left:915.00px;top:2.20px;font-size:9.8px;color:#e6e6e6;letter-spacing:-0.4px">250</span>
<span class="t" style="left:991.00px;top:2.20px;font-size:9.8px;color:#e6e6e6;letter-spacing:-0.4px">275</span>
<span class="t" style="left:1066.00px;top:2.20px;font-size:9.8px;color:#e6e6e6;letter-spacing:-0.4px">300</span>
<span class="t" style="left:1142.00px;top:2.20px;font-size:9.8px;color:#e6e6e6;letter-spacing:-0.4px">325</span>
<span class="t" style="left:1217.00px;top:2.20px;font-size:9.8px;color:#e6e6e6;letter-spacing:-0.4px">350</span>
</div>
<svg class="a" style="left:290px;top:119px;shape-rendering:crispEdges" width="16" height="900" viewBox="0 0 16 900"><rect x="14" y="0" width="1" height="900" fill="#e6e6e6"/><rect x="11" y="4" width="3" height="1" fill="#e6e6e6"/><rect x="2" y="11" width="12" height="1" fill="#e6e6e6"/><rect x="11" y="19" width="3" height="1" fill="#e6e6e6"/><rect x="9" y="27" width="5" height="1" fill="#e6e6e6"/><rect x="11" y="34" width="3" height="1" fill="#e6e6e6"/><rect x="9" y="42" width="5" height="1" fill="#e6e6e6"/><rect x="11" y="49" width="3" height="1" fill="#e6e6e6"/><rect x="9" y="57" width="5" height="1" fill="#e6e6e6"/><rect x="11" y="64" width="3" height="1" fill="#e6e6e6"/><rect x="9" y="72" width="5" height="1" fill="#e6e6e6"/><rect x="11" y="79" width="3" height="1" fill="#e6e6e6"/><rect x="2" y="87" width="12" height="1" fill="#e6e6e6"/><rect x="11" y="95" width="3" height="1" fill="#e6e6e6"/><rect x="9" y="102" width="5" height="1" fill="#e6e6e6"/><rect x="11" y="110" width="3" height="1" fill="#e6e6e6"/><rect x="9" y="117" width="5" height="1" fill="#e6e6e6"/><rect x="11" y="125" width="3" height="1" fill="#e6e6e6"/><rect x="9" y="132" width="5" height="1" fill="#e6e6e6"/><rect x="11" y="140" width="3" height="1" fill="#e6e6e6"/><rect x="9" y="147" width="5" height="1" fill="#e6e6e6"/><rect x="11" y="155" width="3" height="1" fill="#e6e6e6"/><rect x="2" y="163" width="12" height="1" fill="#e6e6e6"/><rect x="11" y="170" width="3" height="1" fill="#e6e6e6"/><rect x="9" y="178" width="5" height="1" fill="#e6e6e6"/><rect x="11" y="185" width="3" height="1" fill="#e6e6e6"/><rect x="9" y="193" width="5" height="1" fill="#e6e6e6"/><rect x="11" y="200" width="3" height="1" fill="#e6e6e6"/><rect x="9" y="208" width="5" height="1" fill="#e6e6e6"/><rect x="11" y="216" width="3" height="1" fill="#e6e6e6"/><rect x="9" y="223" width="5" height="1" fill="#e6e6e6"/><rect x="11" y="231" width="3" height="1" fill="#e6e6e6"/><rect x="2" y="238" width="12" height="1" fill="#e6e6e6"/><rect x="11" y="246" width="3" height="1" fill="#e6e6e6"/><rect x="9" y="253" width="5" height="1" fill="#e6e6e6"/><rect x="11" y="261" width="3" height="1" fill="#e6e6e6"/><rect x="9" y="268" width="5" height="1" fill="#e6e6e6"/><rect x="11" y="276" width="3" height="1" fill="#e6e6e6"/><rect x="9" y="284" width="5" height="1" fill="#e6e6e6"/><rect x="11" y="291" width="3" height="1" fill="#e6e6e6"/><rect x="9" y="299" width="5" height="1" fill="#e6e6e6"/><rect x="11" y="306" width="3" height="1" fill="#e6e6e6"/><rect x="2" y="314" width="12" height="1" fill="#e6e6e6"/><rect x="11" y="321" width="3" height="1" fill="#e6e6e6"/><rect x="9" y="329" width="5" height="1" fill="#e6e6e6"/><rect x="11" y="336" width="3" height="1" fill="#e6e6e6"/><rect x="9" y="344" width="5" height="1" fill="#e6e6e6"/><rect x="11" y="352" width="3" height="1" fill="#e6e6e6"/><rect x="9" y="359" width="5" height="1" fill="#e6e6e6"/><rect x="11" y="367" width="3" height="1" fill="#e6e6e6"/><rect x="9" y="374" width="5" height="1" fill="#e6e6e6"/><rect x="11" y="382" width="3" height="1" fill="#e6e6e6"/><rect x="2" y="389" width="12" height="1" fill="#e6e6e6"/><rect x="11" y="397" width="3" height="1" fill="#e6e6e6"/><rect x="9" y="405" width="5" height="1" fill="#e6e6e6"/><rect x="11" y="412" width="3" height="1" fill="#e6e6e6"/><rect x="9" y="420" width="5" height="1" fill="#e6e6e6"/><rect x="11" y="427" width="3" height="1" fill="#e6e6e6"/><rect x="9" y="435" width="5" height="1" fill="#e6e6e6"/><rect x="11" y="442" width="3" height="1" fill="#e6e6e6"/><rect x="9" y="450" width="5" height="1" fill="#e6e6e6"/><rect x="11" y="457" width="3" height="1" fill="#e6e6e6"/><rect x="2" y="465" width="12" height="1" fill="#e6e6e6"/><rect x="11" y="473" width="3" height="1" fill="#e6e6e6"/><rect x="9" y="480" width="5" height="1" fill="#e6e6e6"/><rect x="11" y="488" width="3" height="1" fill="#e6e6e6"/><rect x="9" y="495" width="5" height="1" fill="#e6e6e6"/><rect x="11" y="503" width="3" height="1" fill="#e6e6e6"/><rect x="9" y="510" width="5" height="1" fill="#e6e6e6"/><rect x="11" y="518" width="3" height="1" fill="#e6e6e6"/><rect x="9" y="525" width="5" height="1" fill="#e6e6e6"/><rect x="11" y="533" width="3" height="1" fill="#e6e6e6"/><rect x="2" y="541" width="12" height="1" fill="#e6e6e6"/><rect x="11" y="548" width="3" height="1" fill="#e6e6e6"/><rect x="9" y="556" width="5" height="1" fill="#e6e6e6"/><rect x="11" y="563" width="3" height="1" fill="#e6e6e6"/><rect x="9" y="571" width="5" height="1" fill="#e6e6e6"/><rect x="11" y="578" width="3" height="1" fill="#e6e6e6"/><rect x="9" y="586" width="5" height="1" fill="#e6e6e6"/><rect x="11" y="594" width="3" height="1" fill="#e6e6e6"/><rect x="9" y="601" width="5" height="1" fill="#e6e6e6"/><rect x="11" y="609" width="3" height="1" fill="#e6e6e6"/><rect x="2" y="616" width="12" height="1" fill="#e6e6e6"/><rect x="11" y="624" width="3" height="1" fill="#e6e6e6"/><rect x="9" y="631" width="5" height="1" fill="#e6e6e6"/><rect x="11" y="639" width="3" height="1" fill="#e6e6e6"/><rect x="9" y="646" width="5" height="1" fill="#e6e6e6"/><rect x="11" y="654" width="3" height="1" fill="#e6e6e6"/><rect x="9" y="662" width="5" height="1" fill="#e6e6e6"/><rect x="11" y="669" width="3" height="1" fill="#e6e6e6"/><rect x="9" y="677" width="5" height="1" fill="#e6e6e6"/><rect x="11" y="684" width="3" height="1" fill="#e6e6e6"/><rect x="2" y="692" width="12" height="1" fill="#e6e6e6"/><rect x="11" y="699" width="3" height="1" fill="#e6e6e6"/><rect x="9" y="707" width="5" height="1" fill="#e6e6e6"/><rect x="11" y="714" width="3" height="1" fill="#e6e6e6"/><rect x="9" y="722" width="5" height="1" fill="#e6e6e6"/><rect x="11" y="730" width="3" height="1" fill="#e6e6e6"/><rect x="9" y="737" width="5" height="1" fill="#e6e6e6"/><rect x="11" y="745" width="3" height="1" fill="#e6e6e6"/><rect x="9" y="752" width="5" height="1" fill="#e6e6e6"/><rect x="11" y="760" width="3" height="1" fill="#e6e6e6"/><rect x="2" y="767" width="12" height="1" fill="#e6e6e6"/><rect x="11" y="775" width="3" height="1" fill="#e6e6e6"/><rect x="9" y="783" width="5" height="1" fill="#e6e6e6"/><rect x="11" y="790" width="3" height="1" fill="#e6e6e6"/><rect x="9" y="798" width="5" height="1" fill="#e6e6e6"/><rect x="11" y="805" width="3" height="1" fill="#e6e6e6"/><rect x="9" y="813" width="5" height="1" fill="#e6e6e6"/><rect x="11" y="820" width="3" height="1" fill="#e6e6e6"/><rect x="9" y="828" width="5" height="1" fill="#e6e6e6"/><rect x="11" y="835" width="3" height="1" fill="#e6e6e6"/><rect x="2" y="843" width="12" height="1" fill="#e6e6e6"/><rect x="11" y="851" width="3" height="1" fill="#e6e6e6"/><rect x="9" y="858" width="5" height="1" fill="#e6e6e6"/><rect x="11" y="866" width="3" height="1" fill="#e6e6e6"/><rect x="9" y="873" width="5" height="1" fill="#e6e6e6"/><rect x="11" y="881" width="3" height="1" fill="#e6e6e6"/><rect x="9" y="888" width="5" height="1" fill="#e6e6e6"/><rect x="11" y="896" width="3" height="1" fill="#e6e6e6"/></svg>
<div class="a" style="left:292px;top:136px;width:3px;height:1px;background:#e6e6e6"></div>
<span class="t" style="left:291.80px;top:139.60px;font-size:9.8px;color:#e6e6e6;">2</span>
<span class="t" style="left:291.80px;top:148.60px;font-size:9.8px;color:#e6e6e6;">5</span>
<span class="t" style="left:291.80px;top:206.60px;font-size:9.8px;color:#e6e6e6;">0</span>
<span class="t" style="left:291.80px;top:282.60px;font-size:9.8px;color:#e6e6e6;">2</span>
<span class="t" style="left:291.80px;top:291.60px;font-size:9.8px;color:#e6e6e6;">5</span>
<span class="t" style="left:291.80px;top:357.60px;font-size:9.8px;color:#e6e6e6;">5</span>
<span class="t" style="left:291.80px;top:366.60px;font-size:9.8px;color:#e6e6e6;">0</span>
<span class="t" style="left:291.80px;top:433.60px;font-size:9.8px;color:#e6e6e6;">7</span>
<span class="t" style="left:291.80px;top:442.60px;font-size:9.8px;color:#e6e6e6;">5</span>
<span class="t" style="left:291.80px;top:508.60px;font-size:9.8px;color:#e6e6e6;">1</span>
<span class="t" style="left:291.80px;top:517.60px;font-size:9.8px;color:#e6e6e6;">0</span>
<span class="t" style="left:291.80px;top:526.60px;font-size:9.8px;color:#e6e6e6;">0</span>
<span class="t" style="left:291.80px;top:584.60px;font-size:9.8px;color:#e6e6e6;">1</span>
<span class="t" style="left:291.80px;top:593.60px;font-size:9.8px;color:#e6e6e6;">2</span>
<span class="t" style="left:291.80px;top:602.60px;font-size:9.8px;color:#e6e6e6;">5</span>
<span class="t" style="left:291.80px;top:660.60px;font-size:9.8px;color:#e6e6e6;">1</span>
<span class="t" style="left:291.80px;top:669.60px;font-size:9.8px;color:#e6e6e6;">5</span>
<span class="t" style="left:291.80px;top:678.60px;font-size:9.8px;color:#e6e6e6;">0</span>
<span class="t" style="left:291.80px;top:735.60px;font-size:9.8px;color:#e6e6e6;">1</span>
<span class="t" style="left:291.80px;top:744.60px;font-size:9.8px;color:#e6e6e6;">7</span>
<span class="t" style="left:291.80px;top:753.60px;font-size:9.8px;color:#e6e6e6;">5</span>
<span class="t" style="left:291.80px;top:811.60px;font-size:9.8px;color:#e6e6e6;">2</span>
<span class="t" style="left:291.80px;top:820.60px;font-size:9.8px;color:#e6e6e6;">0</span>
<span class="t" style="left:291.80px;top:829.60px;font-size:9.8px;color:#e6e6e6;">0</span>
<span class="t" style="left:291.80px;top:886.60px;font-size:9.8px;color:#e6e6e6;">2</span>
<span class="t" style="left:291.80px;top:895.60px;font-size:9.8px;color:#e6e6e6;">2</span>
<span class="t" style="left:291.80px;top:904.60px;font-size:9.8px;color:#e6e6e6;">5</span>
<span class="t" style="left:291.80px;top:962.60px;font-size:9.8px;color:#e6e6e6;">2</span>
<span class="t" style="left:291.80px;top:971.60px;font-size:9.8px;color:#e6e6e6;">5</span>
<span class="t" style="left:291.80px;top:980.60px;font-size:9.8px;color:#e6e6e6;">0</span>
<svg class="a" style="left:290px;top:260px;" width="20" height="30" viewBox="0 0 20 30"><path d="M10 12 L10 21 L14.5 16.5 Z" fill="#e0e0e0"/></svg>
<svg class="a" style="left:1515px;top:105px;" width="20" height="12" viewBox="0 0 20 12"><path d="M7 6 L16 6 L11.5 10.5 Z" fill="#e0e0e0"/></svg>
<div class="a" style="left:465px;top:207px;width:898px;height:634px;background:#fff"></div>
<div class="a" style="left:465px;top:207px;width:898px;height:1px;background:repeating-linear-gradient(90deg,#ff0 0 2px,#000 2px 6px,#ff0 6px 8px)"></div>
<div class="a" style="left:465px;top:840px;width:898px;height:1px;background:repeating-linear-gradient(90deg,#ff0 0 2px,#000 2px 6px,#ff0 6px 8px)"></div>
<div class="a" style="left:465px;top:207px;width:1px;height:634px;background:repeating-linear-gradient(180deg,#ff0 0 2px,#000 2px 6px,#ff0 6px 8px)"></div>
<div class="a" style="left:1362px;top:207px;width:1px;height:634px;background:repeating-linear-gradient(180deg,#ff0 0 2px,#000 2px 6px,#ff0 6px 8px)"></div>
<div class="a" style="left:792px;top:374px;width:155px;height:130px;background:#d3d3d3"></div>
<div class="a" style="left:791px;top:373px;width:157px;height:1px;background:repeating-linear-gradient(90deg,#000 0 4px,transparent 4px 8px)"></div>
<div class="a" style="left:791px;top:504px;width:157px;height:1px;background:repeating-linear-gradient(90deg,#000 0 4px,transparent 4px 8px)"></div>
<div class="a" style="left:791px;top:373px;width:1px;height:132px;background:repeating-linear-gradient(180deg,#000 0 4px,transparent 4px 8px)"></div>
<div class="a" style="left:947px;top:373px;width:1px;height:132px;background:repeating-linear-gradient(180deg,#000 0 4px,transparent 4px 8px)"></div>
<svg class="a" style="left:1533px;top:100px;" width="18" height="18" viewBox="0 0 18 18"><rect x="0" y="0" width="17" height="17" rx="4" fill="#1e1e1e"/><rect x="3" y="3" width="11" height="11" fill="#454545"/><circle cx="8.5" cy="8.5" r="3.5" fill="none" stroke="#4a80d0" stroke-width="2"/><circle cx="8.5" cy="8.5" r="1.8" fill="#888"/></svg>
<div class="a" style="left:1534px;top:119px;width:15px;height:903px;background:#202020"></div>
<div class="a" style="left:1535px;top:164px;width:13px;height:856px;background:#5a5a5a;border-radius:2px;border:1px solid #333"></div>
<div class="a" style="left:308px;top:1023px;width:1228px;height:14px;background:#202020"></div>
<div class="a" style="left:314px;top:1024px;width:1222px;height:13px;background:#5a5a5a;border-radius:2px;border:1px solid #333"></div>
<svg class="a" style="left:292px;top:1025px;" width="13" height="13" viewBox="0 0 13 13"><rect x="1" y="1" width="11" height="11" fill="none" stroke="#ddd" stroke-dasharray="1 1"/><rect x="3" y="3" width="7" height="7" fill="none" stroke="#ddd"/></svg>
<svg class="a" style="left:1537px;top:1023px;" width="14" height="14" viewBox="0 0 14 14"><path d="M7 1 L8 6 L13 7 L8 8 L7 13 L6 8 L1 7 L6 6 Z" fill="#999"/></svg>
<div class="a" style="left:373px;top:1041px;width:47px;height:26px;background:#2b2b2b;border:1px solid #1a1a1a;border-radius:3px"></div>
<span class="t" style="left:380.00px;top:1050.09px;font-size:11px;color:#e0e0e0;transform:scaleX(0.9360);">mm</span>
<svg class="a" style="left:401px;top:1049px;" width="12" height="8" viewBox="0 0 12 8"><path d="M1 1 L6 6 L11 1" stroke="#e6e6e6" stroke-width="1.5" fill="none"/></svg>
<div class="a" style="left:421px;top:1041px;width:29px;height:26px;background:#3a3a3a"></div>
<div class="a" style="left:421px;top:1041px;width:28px;height:26px;overflow:hidden">
<div class="a" style="left:1px;top:6px;width:26px;height:15px;background:#252525"></div>
<span class="t" style="left:1.50px;top:9.51px;font-size:10.5px;color:#e0e0e0;letter-spacing:-0.3px">25,6 %</span>
</div>
<div class="a" style="left:450px;top:1041px;width:18px;height:26px;background:#2b2b2b;border:1px solid #1a1a1a;border-radius:3px"></div>
<svg class="a" style="left:453px;top:1050px;" width="12" height="8" viewBox="0 0 12 8"><path d="M1 1 L6 6 L11 1" stroke="#e6e6e6" stroke-width="1.5" fill="none"/></svg>
<span class="t" style="left:469.45px;top:1048.72px;font-size:12.5px;color:#e6e6e6;transform:scaleX(0.9509);">Hintergrund (124,1 MB)</span>
<div class="a" style="left:1555px;top:55px;width:1px;height:1013px;background:#5a5a5a"></div>
<div class="a" style="left:1587px;top:58px;width:275px;height:28px;background:#262626"></div>
<div class="a" style="left:1616px;top:58px;width:1px;height:28px;background:#333"></div>
<div class="a" style="left:1646px;top:58px;width:1px;height:28px;background:#333"></div>
<div class="a" style="left:1676px;top:58px;width:1px;height:28px;background:#333"></div>
<div class="a" style="left:1706px;top:58px;width:1px;height:28px;background:#333"></div>
<div class="a" style="left:1736px;top:58px;width:1px;height:28px;background:#333"></div>
<div class="a" style="left:1766px;top:58px;width:1px;height:28px;background:#333"></div>
<div class="a" style="left:1796px;top:58px;width:1px;height:28px;background:#333"></div>
<div class="a" style="left:1826px;top:58px;width:1px;height:28px;background:#333"></div>
<div class="a" style="left:1555px;top:55px;width:32px;height:32px;background:#3a3a3a;border:1px solid #5a5a5a;border-bottom:none"></div>
<div class="a" style="left:1587px;top:86px;width:313px;height:1px;background:#575757"></div>
<svg class="a" style="left:1559px;top:60px;" width="26" height="24" viewBox="0 0 26 24"><path d="M5 17 L22 17 L20 23 L3 23 Z" fill="#ddd" stroke="#888" stroke-width="0.7"/><path d="M5 13 L22 13 L20 19 L3 19 Z" fill="#e8e8e8" stroke="#888" stroke-width="0.7"/><path d="M5 3 L24 3 L21 15 L2 15 Z" fill="#f0f0f0" stroke="#999" stroke-width="0.7"/></svg>
<svg class="a" style="left:1590px;top:60px;" width="24" height="24" viewBox="0 0 24 24"><path d="M9 6 H17 A4 4 0 0 1 17 14 H16" stroke="#a89020" stroke-width="2.6" fill="none"/><path d="M10 1 L5 6 L10 11 Z" fill="#a89020"/><path d="M4.5 15 H13 A4 4 0 0 1 13 23 H11" stroke="#f2d000" stroke-width="2.8" fill="none"/><path d="M6 10 L0 15 L6 20 Z" fill="#f2d000"/></svg>
<svg class="a" style="left:1619px;top:62px;" width="26" height="20" viewBox="0 0 26 20"><path d="M3 18 C6 8 20 8 23 18" stroke="#3a70c0" stroke-width="2.5" fill="none"/><rect x="0" y="4" width="5" height="5" fill="#fff"/><rect x="21" y="4" width="5" height="5" fill="#fff"/><circle cx="13" cy="6.5" r="3.5" fill="#fff"/><path d="M5 6.5 H21" stroke="#3a70c0" stroke-width="1.5"/></svg>
<svg class="a" style="left:1652px;top:59px;" width="19" height="26" viewBox="0 0 19 26"><rect x="1" y="3" width="17" height="8" rx="2" fill="#d82020"/><rect x="1" y="10" width="17" height="7" fill="#40c020"/><rect x="1" y="17" width="17" height="7" rx="2" fill="#3a70c0"/><ellipse cx="9.5" cy="3.5" rx="8.5" ry="2.5" fill="#f06060"/></svg>
<div class="a" style="left:1680px;top:59px;width:25px;height:26px;background:radial-gradient(circle at 40% 40%,#1a2a8a,#0a0a30 70%,#000)"></div>
<div class="a" style="left:1710px;top:59px;width:25px;height:25px;background:#fff;border:1px solid #000"></div>
<span class="t" style="left:1713.00px;top:68.05px;font-size:14px;color:#000;font-style:italic">Aa</span>
<div class="a" style="left:1741px;top:61px;width:21px;height:19px;background:#fff;border:1px solid #ccc"></div>
<div class="a" style="left:1744px;top:66px;width:15px;height:9px;background:#d8c098"></div>
<svg class="a" style="left:1771px;top:59px;" width="24" height="26" viewBox="0 0 24 26"><path d="M22 1 L13 15 L10 13 Z" fill="#d08020" stroke="#8a5010" stroke-width="0.6"/><path d="M13 15 L8 19 L6 17 L10 13 Z" fill="#c8c8c8"/><path d="M6 17 C3 18 1 23 0 25 C4 24 8 22 8 19 Z" fill="#111"/></svg>
<div class="a" style="left:1800px;top:59px;width:24px;height:25px;background:#000"></div>
<div class="a" style="left:1801px;top:60px;width:22px;height:23px;background:#e02020;border:1px dotted #fff"></div>
<div class="a" style="left:1831px;top:59px;width:26px;height:26px;background:radial-gradient(circle,#000 0,#000 20%,#fff 65%);border:1px solid #000"></div>
<svg class="a" style="left:1852px;top:77px;" width="8" height="8" viewBox="0 0 8 8"><path d="M4 0 V8 M0 4 H8" stroke="#3a50e0" stroke-width="1.5"/></svg>
<svg class="a" style="left:1885px;top:65px;" width="12" height="12" viewBox="0 0 12 12"><rect x="0.5" y="0.5" width="11" height="11" rx="2" fill="#222" stroke="#ddd"/><path d="M3 6 L9 2.5 V9.5 Z" fill="#ddd"/></svg>
<div class="a" style="left:1558px;top:89px;width:297px;height:27px;background:#2b2b2b;border:1px solid #1e1e1e;border-radius:4px"></div>
<span class="t" style="left:1563.98px;top:96.69px;font-size:12.3px;color:#e6e6e6;transform:scaleX(1.0207);">Modus</span>
<span class="t" style="left:1786.43px;top:96.69px;font-size:12.3px;color:#e6e6e6;transform:scaleX(1.0687);">Normal</span>
<svg class="a" style="left:1833px;top:98px;" width="13" height="8" viewBox="0 0 13 8"><path d="M1 1 L6.5 7 L12 1" stroke="#e6e6e6" stroke-width="1.5" fill="none"/></svg>
<div class="a" style="left:1856px;top:89px;width:43px;height:27px;background:#2b2b2b;border:1px solid #1e1e1e;border-radius:4px"></div>
<svg class="a" style="left:1861px;top:96px;" width="14" height="14" viewBox="0 0 14 14"><path d="M4 4 A5 5 0 1 1 4 11" stroke="#f2b820" stroke-width="2" fill="none"/><path d="M0 4 L6 1 L6 7 Z" fill="#f2b820"/><circle cx="3.5" cy="12" r="1.6" fill="#3a6ab8"/></svg>
<svg class="a" style="left:1879px;top:98px;" width="13" height="8" viewBox="0 0 13 8"><path d="M1 1 L6.5 7 L12 1" stroke="#e6e6e6" stroke-width="1.5" fill="none"/></svg>
<div class="a" style="left:1558px;top:117px;width:341px;height:17px;background:#5a5a5a;border:1px solid #8a8a8a"></div>
<div class="a" style="left:1886px;top:118px;width:1px;height:15px;background:#1a1a1a"></div>
<span class="t" style="left:1559.97px;top:119.99px;font-size:12.3px;color:#e6e6e6;transform:scaleX(1.0288);">Deckkraft</span>
<span class="t" style="right:20.16px;top:119.99px;font-size:12.3px;color:#e6e6e6;transform-origin:100% 0;">100,0</span>
<svg class="a" style="left:1888px;top:119px;" width="10" height="14" viewBox="0 0 10 14"><path d="M1.5 5.5 L5 2 L8.5 5.5" stroke="#777" stroke-width="1.8" fill="none"/><path d="M1.5 8.5 L5 12 L8.5 8.5" stroke="#ccc" stroke-width="1.8" fill="none"/></svg>
<span class="t" style="left:1558.50px;top:140.89px;font-size:12.3px;color:#e6e6e6;transform:scaleX(0.9647);">Sperre:</span>
<svg class="a" style="left:1605px;top:141px;" width="13" height="13" viewBox="0 0 13 13"><path d="M12 0 L7 7 L5 6 Z" fill="#d08020"/><path d="M7 7 L4 10 L3 9 L5 6 Z" fill="#ccc"/><path d="M3 9 C1 10 0 12 0 13 C2 13 4 12 4 10 Z" fill="#111"/></svg>
<svg class="a" style="left:1628px;top:141px;" width="13" height="13" viewBox="0 0 13 13"><path d="M6.5 0 V13 M0 6.5 H13" stroke="#3a70c0" stroke-width="1.3"/><path d="M6.5 0 L4.5 2 H8.5 Z M6.5 13 L4.5 11 H8.5 Z M0 6.5 L2 4.5 V8.5 Z M13 6.5 L11 4.5 V8.5 Z" fill="#3a70c0"/></svg>
<svg class="a" style="left:1652px;top:140px;" width="13" height="13" viewBox="0 0 13 13"><g fill="#bbb"><rect x="0" y="0" width="3" height="3"/><rect x="6" y="0" width="3" height="3"/><rect x="3" y="3" width="3" height="3"/><rect x="9" y="3" width="3" height="3"/><rect x="0" y="6" width="3" height="3"/><rect x="6" y="6" width="3" height="3"/><rect x="3" y="9" width="3" height="3"/><rect x="9" y="9" width="3" height="3"/></g><g fill="#777"><rect x="3" y="0" width="3" height="3"/><rect x="9" y="0" width="3" height="3"/><rect x="0" y="3" width="3" height="3"/><rect x="6" y="3" width="3" height="3"/><rect x="3" y="6" width="3" height="3"/><rect x="9" y="6" width="3" height="3"/><rect x="0" y="9" width="3" height="3"/><rect x="6" y="9" width="3" height="3"/></g></svg>
<div class="a" style="left:1558px;top:160px;width:341px;height:871px;background:#303030"></div>
<div class="a" style="left:1899px;top:54px;width:2px;height:1014px;background:#3d3d3d"></div>
<div class="a" style="left:1901px;top:54px;width:1px;height:1014px;background:#5a5a5a"></div>
<div class="a" style="left:1559px;top:161px;width:340px;height:31px;background:#1f1f1f"></div>
<div class="a" style="left:1560px;top:165px;width:26px;height:27px;border:1px dotted #ddd"></div>
<svg class="a" style="left:1565px;top:170px;" width="16" height="12" viewBox="0 0 16 12"><ellipse cx="8" cy="8" rx="7" ry="6" fill="#3a3a3a" stroke="#3a6ab8" stroke-width="1.5"/></svg>
<div class="a" style="left:1634px;top:163px;width:36px;height:27px;background:#fff"></div>
<span class="t" style="left:1673.68px;top:170.49px;font-size:12.3px;color:#e6e6e6;transform:scaleX(1.0203);">Hintergrund</span>
<div class="a" style="left:1556px;top:1031px;width:343px;height:37px;background:#3b3b3b"></div>
<svg class="a" style="left:1566px;top:1037px;" width="24" height="26" viewBox="0 0 24 26"><path d="M3 3 H15 L21 9 V25 H3 Z" fill="#e8e8e8"/><path d="M15 3 V9 H21" fill="#ccc"/><path d="M6 1 V11 M1 6 H11" stroke="#000" stroke-width="2.5"/></svg>
<svg class="a" style="left:1607px;top:1037px;" width="26" height="26" viewBox="0 0 26 26"><path d="M1 10 H10 L12 8 H24 V24 H1 Z" fill="#6a9ad8"/><path d="M1 13 H25 V24 H1 Z" fill="#5a8ad0"/><path d="M6 1 V11 M1 6 H11" stroke="#000" stroke-width="2.5"/></svg>
<svg class="a" style="left:1651px;top:1042px;" width="24" height="14" viewBox="0 0 24 14"><path d="M2 12 L12 2 L22 12" stroke="#b08060" stroke-width="3.5" fill="none"/></svg>
<svg class="a" style="left:1693px;top:1042px;" width="24" height="14" viewBox="0 0 24 14"><path d="M2 2 L12 12 L22 2" stroke="#b08060" stroke-width="3.5" fill="none"/></svg>
<svg class="a" style="left:1734px;top:1037px;" width="26" height="26" viewBox="0 0 26 26"><rect x="5" y="6" width="19" height="19" fill="#3a6ab8" stroke="#2a5aa8"/><rect x="1" y="1" width="13" height="12" fill="#8ab0e0" stroke="#1f4a8a" stroke-width="1.5"/></svg>
<svg class="a" style="left:1776px;top:1037px;" width="26" height="26" viewBox="0 0 26 26"><path d="M3 9 L14 3 H9 L1 9 Z M3 16 L14 10 H9 L1 16 Z M3 24 L14 18 H9 L1 24 Z" fill="#fff"/><path d="M19 2 V21" stroke="#f29a20" stroke-width="2.5"/><path d="M14 18 L19 25 L24 18 Z" fill="#f29a20"/></svg>
<svg class="a" style="left:1818px;top:1037px;" width="26" height="26" viewBox="0 0 26 26"><path d="M5 10 L25 10 L21 23 H1 Z" fill="#e8e8e8"/><path d="M2 2 H13 V10 L7 14 L2 10 Z" fill="#ddd" stroke="#999" stroke-width="0.8"/></svg>
<svg class="a" style="left:1866px;top:1040px;" width="19" height="19" viewBox="0 0 19 19"><path d="M2 2 L17 17 M17 2 L2 17" stroke="#d00000" stroke-width="3.5"/></svg>
<div class="a" style="left:421px;top:531px;width:468px;height:468px;background:rgba(0,0,0,0.22);filter:blur(6px);border-radius:6px"></div>
<div class="a" style="left:427px;top:534px;width:456px;height:457px;background:#474747;border:1px solid #4e4e4e"></div>
<div class="a" style="left:427px;top:534px;width:456px;height:31px;background:#fff;border:1px solid #9a9a9a;border-bottom:none"></div>
<svg class="a" style="left:440px;top:542px;" width="13" height="11" viewBox="0 0 13 11"><path d="M1 6 L4 3 L6 4 L9 1 L10 3 L8 5 L11 7 L12 10 L9 8 L5 8 L2 8 Z" fill="#4a4030"/></svg>
<span class="t" style="left:457.00px;top:543.00px;font-size:15px;color:#999;transform:scaleX(0.9616);">Schlagschatten</span>
<svg class="a" style="left:862px;top:544px;" width="11" height="11" viewBox="0 0 11 11"><path d="M0.5 0.5 L10.5 10.5 M10.5 0.5 L0.5 10.5" stroke="#777" stroke-width="1"/></svg>
<div class="a" style="left:428px;top:565px;width:454px;height:38px;background:#444;border-top:1px solid #2e2e2e;border-left:1px solid #353535;border-bottom:1px solid #2e2e2e"></div>
<svg class="a" style="left:432px;top:569px;" width="23" height="23" viewBox="0 0 23 23"><path d="M17.7 5.4 A8.7 8.7 0 1 0 19.9 12.2" stroke="#2a2a2a" stroke-width="4.5" fill="none" transform="translate(0.5,0.8)" opacity="0.6"/><path d="M17.7 5.4 A8.7 8.7 0 1 0 19.9 12.2" stroke="#f0f0f0" stroke-width="4.6" fill="none"/><path d="M21.6 11.2 H13.5 Q10.2 11.4 10.8 13.6" stroke="#f0f0f0" stroke-width="2.6" fill="none"/></svg>
<span class="t" style="left:461.00px;top:569.73px;font-size:16.5px;color:#e8e8e8;font-weight:bold;transform:scaleX(1.1323);">Schlagschatten</span>
<span class="t" style="left:461.00px;top:588.17px;font-size:11.5px;color:#e0e0e0;transform:scaleX(1.0989);">Hintergrund-105 ([Unbenannt])</span>
<div class="a" style="left:843px;top:571px;width:35px;height:26px;background:#fff;border:1px solid #000"></div>
<div class="a" style="left:857px;top:578px;width:4px;height:4px;background:#ccc"></div>
<span class="t" style="left:432.81px;top:617.82px;font-size:12.5px;color:#e6e6e6;transform:scaleX(1.1862);">Einstellungen:</span>
<div class="a" style="left:532px;top:609px;width:292px;height:29px;background:#2b2b2b;border:1px solid #1c1c1c;border-radius:4px"></div>
<svg class="a" style="left:805px;top:619px;" width="13" height="8" viewBox="0 0 13 8"><path d="M1 1 L6.5 7 L12 1" stroke="#e6e6e6" stroke-width="1.5" fill="none"/></svg>
<svg class="a" style="left:836px;top:617px;" width="12" height="12" viewBox="0 0 12 12"><path d="M6 0 V12 M0 6 H12" stroke="#e6e6e6" stroke-width="1.2"/></svg>
<svg class="a" style="left:858px;top:617px;" width="13" height="13" viewBox="0 0 13 13"><rect x="0.5" y="0.5" width="12" height="12" rx="2" fill="#222" stroke="#ddd"/><path d="M3 6.5 L9 3 V10 Z" fill="#ddd"/></svg>
<div class="a" style="left:434px;top:644px;width:408px;height:19px;background:#2b2b2b;border:1px solid #8a8a8a"></div>
<div class="a" style="left:435px;top:645px;width:294px;height:17px;background:#5a5a5a"></div>
<div class="a" style="left:729px;top:645px;width:1px;height:17px;background:#111"></div>
<span class="t" style="left:437.00px;top:649.12px;font-size:12.5px;color:#e6e6e6;">X</span>
<span class="t" style="right:1079.05px;top:649.12px;font-size:12.5px;color:#e6e6e6;transform-origin:100% 0;">20,000</span>
<div class="a" style="left:829px;top:645px;width:12px;height:17px;background:#242424"></div>
<svg class="a" style="left:830px;top:646px;" width="10" height="14" viewBox="0 0 10 14"><path d="M1.5 5.5 L5 2 L8.5 5.5" stroke="#d0d0d0" stroke-width="1.8" fill="none"/><path d="M1.5 8.5 L5 12 L8.5 8.5" stroke="#d0d0d0" stroke-width="1.8" fill="none"/></svg>
<div class="a" style="left:434px;top:665px;width:408px;height:19px;background:#2b2b2b;border:1px solid #8a8a8a"></div>
<div class="a" style="left:435px;top:666px;width:294px;height:17px;background:#5a5a5a"></div>
<div class="a" style="left:729px;top:666px;width:1px;height:17px;background:#111"></div>
<span class="t" style="left:437.00px;top:670.12px;font-size:12.5px;color:#e6e6e6;">Y</span>
<span class="t" style="right:1079.05px;top:670.12px;font-size:12.5px;color:#e6e6e6;transform-origin:100% 0;">20,000</span>
<div class="a" style="left:829px;top:666px;width:12px;height:17px;background:#242424"></div>
<svg class="a" style="left:830px;top:667px;" width="10" height="14" viewBox="0 0 10 14"><path d="M1.5 5.5 L5 2 L8.5 5.5" stroke="#d0d0d0" stroke-width="1.8" fill="none"/><path d="M1.5 8.5 L5 12 L8.5 8.5" stroke="#d0d0d0" stroke-width="1.8" fill="none"/></svg>
<svg class="a" style="left:856px;top:645px;" width="11" height="38" viewBox="0 0 11 38"><path d="M3 1 H7" stroke="#ddd" stroke-width="2"/><rect x="2.5" y="11.5" width="6" height="7" rx="2" fill="none" stroke="#ccc" stroke-width="1.5"/><rect x="2.5" y="21" width="6" height="7" rx="2" fill="none" stroke="#ccc" stroke-width="1.5"/><path d="M5.5 16 V24" stroke="#ccc"/><path d="M3 37 H7" stroke="#ddd" stroke-width="2"/></svg>
<div class="a" style="left:434px;top:686px;width:442px;height:19px;background:#2b2b2b;border:1px solid #8a8a8a"></div>
<div class="a" style="left:435px;top:687px;width:42px;height:17px;background:#5a5a5a"></div>
<div class="a" style="left:477px;top:687px;width:1px;height:17px;background:#111"></div>
<span class="t" style="left:437.00px;top:690.52px;font-size:12.5px;color:#e6e6e6;transform:scaleX(1.1476);">Weichzeichnenradius</span>
<span class="t" style="right:1045.05px;top:690.52px;font-size:12.5px;color:#e6e6e6;transform-origin:100% 0;">10,00</span>
<div class="a" style="left:864px;top:687px;width:12px;height:17px;background:#242424"></div>
<svg class="a" style="left:865px;top:688px;" width="10" height="14" viewBox="0 0 10 14"><path d="M1.5 5.5 L5 2 L8.5 5.5" stroke="#d0d0d0" stroke-width="1.8" fill="none"/><path d="M1.5 8.5 L5 12 L8.5 8.5" stroke="#d0d0d0" stroke-width="1.8" fill="none"/></svg>
<div class="a" style="left:434px;top:707px;width:442px;height:29px;background:#2b2b2b;border:1px solid #1c1c1c;border-radius:4px"></div>
<span class="t" style="left:441.00px;top:716.52px;font-size:12.5px;color:#e6e6e6;transform:scaleX(1.1890);">Ausweitungsform</span>
<span class="t" style="right:1054.25px;top:716.52px;font-size:12.5px;color:#e6e6e6;transform-origin:100% 0;">Kreis</span>
<svg class="a" style="left:857px;top:717px;" width="13" height="8" viewBox="0 0 13 8"><path d="M1 1 L6.5 7 L12 1" stroke="#e6e6e6" stroke-width="1.5" fill="none"/></svg>
<div class="a" style="left:434px;top:738px;width:442px;height:19px;background:#2b2b2b;border:1px solid #8a8a8a"></div>
<div class="a" style="left:435px;top:739px;width:212px;height:17px;background:#5a5a5a"></div>
<div class="a" style="left:647px;top:739px;width:1px;height:17px;background:#111"></div>
<span class="t" style="left:437.00px;top:742.12px;font-size:12.5px;color:#e6e6e6;transform:scaleX(1.1637);">Ausweitungsradius</span>
<span class="t" style="right:1045.05px;top:742.12px;font-size:12.5px;color:#e6e6e6;transform-origin:100% 0;">0</span>
<div class="a" style="left:864px;top:739px;width:12px;height:17px;background:#242424"></div>
<svg class="a" style="left:865px;top:740px;" width="10" height="14" viewBox="0 0 10 14"><path d="M1.5 5.5 L5 2 L8.5 5.5" stroke="#d0d0d0" stroke-width="1.8" fill="none"/><path d="M1.5 8.5 L5 12 L8.5 8.5" stroke="#d0d0d0" stroke-width="1.8" fill="none"/></svg>
<span class="t" style="left:432.91px;top:770.32px;font-size:12.5px;color:#e6e6e6;transform:scaleX(1.0883);">Farbe</span>
<div class="a" style="left:473px;top:759px;width:366px;height:34px;background:#2b2b2b;border:1px solid #1c1c1c;border-radius:4px"></div>
<div class="a" style="left:478px;top:764px;width:355px;height:24px;background:#000"></div>
<div class="a" style="left:843px;top:759px;width:33px;height:34px;background:#2b2b2b;border:1px solid #1c1c1c;border-radius:4px"></div>
<svg class="a" style="left:852px;top:767px;" width="16" height="18" viewBox="0 0 16 18"><path d="M12 2 L3 11" stroke="#ccc" stroke-width="2"/><circle cx="12.5" cy="2" r="1.5" fill="#3a70c0"/><rect x="11" y="13" width="4" height="4" fill="#5a8ad0"/></svg>
<div class="a" style="left:434px;top:795px;width:442px;height:19px;background:#2b2b2b;border:1px solid #8a8a8a"></div>
<div class="a" style="left:435px;top:796px;width:105px;height:17px;background:#5a5a5a"></div>
<div class="a" style="left:540px;top:796px;width:1px;height:17px;background:#111"></div>
<span class="t" style="left:435.82px;top:798.92px;font-size:12.5px;color:#e6e6e6;transform:scaleX(1.1813);">Deckkraft</span>
<span class="t" style="right:1045.05px;top:798.92px;font-size:12.5px;color:#e6e6e6;transform-origin:100% 0;">0,500</span>
<div class="a" style="left:864px;top:796px;width:12px;height:17px;background:#242424"></div>
<svg class="a" style="left:865px;top:797px;" width="10" height="14" viewBox="0 0 10 14"><path d="M1.5 5.5 L5 2 L8.5 5.5" stroke="#d0d0d0" stroke-width="1.8" fill="none"/><path d="M1.5 8.5 L5 12 L8.5 8.5" stroke="#d0d0d0" stroke-width="1.8" fill="none"/></svg>
<div class="a" style="left:434px;top:820px;width:442px;height:29px;background:#2b2b2b;border:1px solid #1c1c1c;border-radius:4px"></div>
<span class="t" style="left:445.50px;top:828.72px;font-size:12.5px;color:#e6e6e6;transform:scaleX(1.1582);">Auswahl als Eingabe verwenden</span>
<svg class="a" style="left:857px;top:830px;" width="13" height="8" viewBox="0 0 13 8"><path d="M1 1 L6.5 7 L12 1" stroke="#e6e6e6" stroke-width="1.5" fill="none"/></svg>
<div class="a" style="left:436px;top:854px;width:14px;height:13px;background:#1c1c1c;border-radius:3px"></div>
<div class="a" style="left:439px;top:859px;width:8px;height:3px;background:#fff"></div>
<span class="t" style="left:452.20px;top:855.32px;font-size:12.5px;color:#e6e6e6;transform:scaleX(1.1994);">Mittelung-Einstellungen</span>
<div class="a" style="left:450px;top:870px;width:379px;height:29px;background:#2b2b2b;border:1px solid #1c1c1c;border-radius:4px"></div>
<span class="t" style="left:456.24px;top:878.82px;font-size:12.5px;color:#e6e6e6;transform:scaleX(1.1636);">Modus</span>
<span class="t" style="left:746.04px;top:878.82px;font-size:12.5px;color:#e6e6e6;transform:scaleX(1.1576);">Ersetzen</span>
<svg class="a" style="left:810px;top:880px;" width="13" height="8" viewBox="0 0 13 8"><path d="M1 1 L6.5 7 L12 1" stroke="#e6e6e6" stroke-width="1.5" fill="none"/></svg>
<div class="a" style="left:833px;top:870px;width:43px;height:29px;background:#2b2b2b;border:1px solid #1c1c1c;border-radius:4px"></div>
<svg class="a" style="left:838px;top:877px;" width="14" height="14" viewBox="0 0 14 14"><path d="M4 4 A5 5 0 1 1 4 11" stroke="#f2b820" stroke-width="2" fill="none"/><path d="M0 4 L6 1 L6 7 Z" fill="#f2b820"/><circle cx="3.5" cy="12" r="1.6" fill="#3a6ab8"/></svg>
<svg class="a" style="left:857px;top:880px;" width="13" height="8" viewBox="0 0 13 8"><path d="M1 1 L6.5 7 L12 1" stroke="#e6e6e6" stroke-width="1.5" fill="none"/></svg>
<div class="a" style="left:450px;top:901px;width:426px;height:19px;background:#5a5a5a;border:1px solid #8a8a8a"></div>
<div class="a" style="left:861px;top:902px;width:1px;height:17px;background:#111"></div>
<span class="t" style="left:451.30px;top:904.82px;font-size:12.5px;color:#e6e6e6;transform:scaleX(1.1985);">Deckkraft</span>
<span class="t" style="right:1045.05px;top:904.82px;font-size:12.5px;color:#e6e6e6;transform-origin:100% 0;">100,0</span>
<svg class="a" style="left:865px;top:903px;" width="10" height="14" viewBox="0 0 10 14"><path d="M1.5 5.5 L5 2 L8.5 5.5" stroke="#777" stroke-width="1.8" fill="none"/><path d="M1.5 8.5 L5 12 L8.5 8.5" stroke="#ccc" stroke-width="1.8" fill="none"/></svg>
<div class="a" style="left:436px;top:929px;width:14px;height:14px;background:#1c1c1c;border-radius:3px"></div>
<svg class="a" style="left:436px;top:929px;" width="14" height="14" viewBox="0 0 14 14"><path d="M4 4 L10 10 M10 4 L4 10" stroke="#fff" stroke-width="2.2"/></svg>
<span class="t" style="left:454.50px;top:929.82px;font-size:12.5px;color:#9a9a9a;transform:scaleX(1.1233);">Vorschau</span>
<div class="a" style="left:753px;top:929px;width:14px;height:14px;background:#1c1c1c;border-radius:3px"></div>
<span class="t" style="left:771.40px;top:929.82px;font-size:12.5px;color:#e6e6e6;transform:scaleX(1.1763);">Geteilte Ansicht</span>
<div class="a" style="left:434px;top:957px;width:106px;height:27px;background:#2b2b2b;border:1px solid #1c1c1c;border-radius:4px"></div>
<span class="t" style="left:469.71px;top:965.32px;font-size:12.5px;color:#e6e6e6;transform:scaleX(1.2888);">Hilfe</span>
<div class="a" style="left:546px;top:957px;width:106px;height:27px;background:#2b2b2b;border:1px solid #1c1c1c;border-radius:4px"></div>
<span class="t" style="left:555.30px;top:965.32px;font-size:12.5px;color:#e6e6e6;transform:scaleX(1.1694);">Zurücksetzen</span>
<div class="a" style="left:658px;top:957px;width:106px;height:27px;background:#2b2b2b;border:1px solid #1c1c1c;border-radius:4px"></div>
<span class="t" style="left:701.40px;top:965.32px;font-size:12.5px;color:#e6e6e6;transform:scaleX(0.9507);">OK</span>
<div class="a" style="left:770px;top:957px;width:106px;height:27px;background:#2b2b2b;border:1px solid #1c1c1c;border-radius:4px"></div>
<span class="t" style="left:788.10px;top:965.32px;font-size:12.5px;color:#e6e6e6;transform:scaleX(1.1453);">Abbrechen</span>
<div class="a" style="left:1498px;top:171px;width:226px;height:704px;background:rgba(0,0,0,0.25);filter:blur(2px)"></div>
<div class="a" style="left:1500px;top:173px;width:221px;height:700px;background:#4a4a4a;border:1px solid #5e5e5e"></div>
<span class="t" style="left:1528.27px;top:182.53px;font-size:12.6px;color:#f2f2f2;transform:scaleX(0.9275);">Ebeneneigenschaften ...</span>
<svg class="a" style="left:1508px;top:182px;" width="12" height="12" viewBox="0 0 12 12"><path d="M11 1 L2 10" stroke="#3a70c0" stroke-width="2"/><path d="M1 11 L2 9 L3 10 Z" fill="#e0a040"/></svg>
<span class="t" style="left:1528.27px;top:205.53px;font-size:12.6px;color:#f2f2f2;transform:scaleX(0.9342);">Farbverlaufsraum</span>
<svg class="a" style="left:1706px;top:205px;" width="7" height="12" viewBox="0 0 7 12"><path d="M1 1 L6 6 L1 11" stroke="#e6e6e6" stroke-width="1.2" fill="none"/></svg>
<span class="t" style="left:1528.23px;top:228.53px;font-size:12.6px;color:#f2f2f2;transform:scaleX(0.9679);">Kompositionsraum</span>
<svg class="a" style="left:1706px;top:228px;" width="7" height="12" viewBox="0 0 7 12"><path d="M1 1 L6 6 L1 11" stroke="#e6e6e6" stroke-width="1.2" fill="none"/></svg>
<span class="t" style="left:1528.24px;top:251.53px;font-size:12.6px;color:#f2f2f2;transform:scaleX(0.9589);">Kompositionsmodus</span>
<svg class="a" style="left:1706px;top:251px;" width="7" height="12" viewBox="0 0 7 12"><path d="M1 1 L6 6 L1 11" stroke="#e6e6e6" stroke-width="1.2" fill="none"/></svg>
<span class="t" style="left:1528.27px;top:274.53px;font-size:12.6px;color:#f2f2f2;transform:scaleX(0.9296);">Farbmarkierung</span>
<svg class="a" style="left:1706px;top:274px;" width="7" height="12" viewBox="0 0 7 12"><path d="M1 1 L6 6 L1 11" stroke="#e6e6e6" stroke-width="1.2" fill="none"/></svg>
<div class="a" style="left:1506px;top:297px;width:209px;height:1px;background:#222"></div>
<span class="t" style="left:1528.26px;top:313.36px;font-size:12.6px;color:#f2f2f2;transform:scaleX(0.9436);">Neue Ebene ...</span>
<svg class="a" style="left:1508px;top:312px;" width="12" height="13" viewBox="0 0 12 13"><path d="M1 2 H8 L11 5 V12 H1 Z" fill="#eee"/><path d="M3 0 V5 M0.5 2.5 H5.5" stroke="#000" stroke-width="1.3"/></svg>
<span class="t" style="left:1528.26px;top:336.36px;font-size:12.6px;color:#f2f2f2;transform:scaleX(0.9436);">Neu aus Sichtbarem</span>
<span class="t" style="left:1528.26px;top:359.36px;font-size:12.6px;color:#f2f2f2;transform:scaleX(0.9436);">Neue Ebenengruppe</span>
<svg class="a" style="left:1508px;top:358px;" width="13" height="13" viewBox="0 0 13 13"><path d="M0 5 H5 L6 4 H12 V12 H0 Z" fill="#6a9ad8"/><path d="M3 0 V5 M0.5 2.5 H5.5" stroke="#000" stroke-width="1.3"/></svg>
<span class="t" style="left:1528.26px;top:382.36px;font-size:12.6px;color:#f2f2f2;transform:scaleX(0.9436);">Ebene duplizieren</span>
<svg class="a" style="left:1508px;top:381px;" width="13" height="13" viewBox="0 0 13 13"><rect x="3.5" y="4.5" width="9" height="8" fill="#3a6ab8" stroke="#5a8ad0"/><rect x="0.5" y="0.5" width="7" height="6" fill="#8ab0e0" stroke="#1f4a8a"/></svg>
<span class="t" style="left:1528.26px;top:405.36px;font-size:12.6px;color:#9a9a9a;transform:scaleX(0.9436);">Nach unten vereinen</span>
<svg class="a" style="left:1508px;top:405px;" width="13" height="12" viewBox="0 0 13 12"><path d="M1 4 L7 1 H4 L0 4 Z M1 8 L7 5 H4 L0 8 Z M1 12 L7 9 H4 L0 12 Z" fill="#aaa"/><path d="M10 1 V9 M8 8 L10 11 L12 8" stroke="#b09070" stroke-width="1.2" fill="none"/></svg>
<span class="t" style="left:1528.26px;top:428.36px;font-size:12.6px;color:#f2f2f2;transform:scaleX(0.9436);">Ebene löschen</span>
<svg class="a" style="left:1509px;top:428px;" width="11" height="11" viewBox="0 0 11 11"><path d="M1 1 L10 10 M10 1 L1 10" stroke="#d01010" stroke-width="2.4"/></svg>
<div class="a" style="left:1506px;top:451px;width:209px;height:1px;background:#222"></div>
<span class="t" style="left:1528.26px;top:467.19px;font-size:12.6px;color:#f2f2f2;transform:scaleX(0.9436);">Ebenengröße ...</span>
<svg class="a" style="left:1508px;top:465px;" width="13" height="13" viewBox="0 0 13 13"><rect x="3.5" y="4.5" width="8" height="8" fill="#3a6ab8" stroke="#8ab0e0"/><path d="M1 11 V1 H10" stroke="#e08020" stroke-width="1.5" fill="none"/></svg>
<span class="t" style="left:1528.26px;top:490.19px;font-size:12.6px;color:#f2f2f2;transform:scaleX(0.9436);">Ebene auf Bildgröße</span>
<svg class="a" style="left:1508px;top:488px;" width="14" height="13" viewBox="0 0 14 13"><rect x="0.5" y="3.5" width="12" height="9" fill="#ddd" stroke="#999"/><rect x="2" y="0.5" width="9" height="6" fill="#e0b060"/><path d="M10 2 H13 V5" stroke="#e05020" fill="none"/></svg>
<span class="t" style="left:1528.26px;top:513.19px;font-size:12.6px;color:#f2f2f2;transform:scaleX(0.9436);">Ebene skalieren ...</span>
<svg class="a" style="left:1508px;top:511px;" width="13" height="13" viewBox="0 0 13 13"><path d="M1 1 L8 8" stroke="#e08020" stroke-width="1.5"/><rect x="5.5" y="5.5" width="7" height="7" fill="#3a6ab8" stroke="#8ab0e0"/></svg>
<div class="a" style="left:1506px;top:536px;width:209px;height:1px;background:#222"></div>
<span class="t" style="left:1528.26px;top:552.02px;font-size:12.6px;color:#f2f2f2;transform:scaleX(0.9436);">Ebenenmaske hinzufügen ...</span>
<svg class="a" style="left:1508px;top:550px;" width="14" height="13" viewBox="0 0 14 13"><path d="M3 6 H13 L11 12 H1 Z" fill="#e8e8e8"/><path d="M1 1 H7 V6 L4 8 L1 6 Z" fill="#ddd" stroke="#999" stroke-width="0.6"/></svg>
<span class="t" style="left:1528.26px;top:575.02px;font-size:12.6px;color:#9a9a9a;transform:scaleX(0.9436);">Ebenenmaske anwenden</span>
<span class="t" style="left:1528.26px;top:598.02px;font-size:12.6px;color:#9a9a9a;transform:scaleX(0.9436);">Ebenenmaske löschen</span>
<svg class="a" style="left:1509px;top:597px;" width="11" height="11" viewBox="0 0 11 11"><path d="M1 1 L10 10 M10 1 L1 10" stroke="#b06060" stroke-width="1.6" stroke-dasharray="1.5 0.5"/></svg>
<div class="a" style="left:1506px;top:621px;width:209px;height:1px;background:#222"></div>
<span class="t" style="left:1528.26px;top:636.85px;font-size:12.6px;color:#9a9a9a;transform:scaleX(0.9436);">Ebenenmaske anzeigen</span>
<div class="a" style="left:1510px;top:636px;width:13px;height:13px;background:#222;border-radius:3px"></div>
<span class="t" style="left:1528.26px;top:659.85px;font-size:12.6px;color:#9a9a9a;transform:scaleX(0.9436);">Ebenenmaske bearbeiten</span>
<div class="a" style="left:1510px;top:659px;width:13px;height:13px;background:#222;border-radius:3px"></div>
<span class="t" style="left:1528.26px;top:682.85px;font-size:12.6px;color:#9a9a9a;transform:scaleX(0.9436);">Ebenenmaske deaktivieren</span>
<div class="a" style="left:1510px;top:682px;width:13px;height:13px;background:#222;border-radius:3px"></div>
<span class="t" style="left:1529.20px;top:705.85px;font-size:12.6px;color:#9a9a9a;transform:scaleX(0.9436);">Auswahl aus Maske</span>
<svg class="a" style="left:1508px;top:704px;" width="13" height="13" viewBox="0 0 13 13"><rect x="0.5" y="0.5" width="12" height="12" fill="#888" stroke="#ccc" stroke-dasharray="1 1"/><circle cx="6.5" cy="6.5" r="3.5" fill="#b07070"/></svg>
<div class="a" style="left:1506px;top:729px;width:209px;height:1px;background:#222"></div>
<span class="t" style="left:1529.20px;top:744.68px;font-size:12.6px;color:#9a9a9a;transform:scaleX(0.9436);">Alphakanal hinzufügen</span>
<svg class="a" style="left:1508px;top:743px;" width="13" height="13" viewBox="0 0 13 13"><g fill="#aaa"><rect x="0" y="0" width="4" height="4"/><rect x="8" y="0" width="4" height="4"/><rect x="4" y="4" width="4" height="4"/><rect x="0" y="8" width="4" height="4"/><rect x="8" y="8" width="4" height="4"/></g><g fill="#777"><rect x="4" y="0" width="4" height="4"/><rect x="0" y="4" width="4" height="4"/><rect x="8" y="4" width="4" height="4"/><rect x="4" y="8" width="4" height="4"/></g></svg>
<span class="t" style="left:1529.20px;top:767.68px;font-size:12.6px;color:#f2f2f2;transform:scaleX(0.9436);">Alphakanal entfernen</span>
<span class="t" style="left:1529.20px;top:790.68px;font-size:12.6px;color:#f2f2f2;transform:scaleX(0.9436);">Auswahl aus Alphakanal</span>
<svg class="a" style="left:1508px;top:789px;" width="13" height="13" viewBox="0 0 13 13"><rect x="0.5" y="0.5" width="12" height="12" fill="#e02020" stroke="#fff" stroke-dasharray="1 1"/><circle cx="6.5" cy="6.5" r="3.5" fill="#ff4040" stroke="#fff" stroke-width="0.8"/></svg>
<div class="a" style="left:1506px;top:814px;width:209px;height:1px;background:#222"></div>
<span class="t" style="left:1529.20px;top:829.51px;font-size:12.6px;color:#f2f2f2;transform:scaleX(0.9436);">Sichtbare Ebenen vereinen ...</span>
<span class="t" style="left:1528.26px;top:852.51px;font-size:12.6px;color:#f2f2f2;transform:scaleX(0.9436);">Bild zusammenfügen</span>
<div class="a" style="left:1902px;top:0px;width:2px;height:1068px;background:#000"></div></body></html>
